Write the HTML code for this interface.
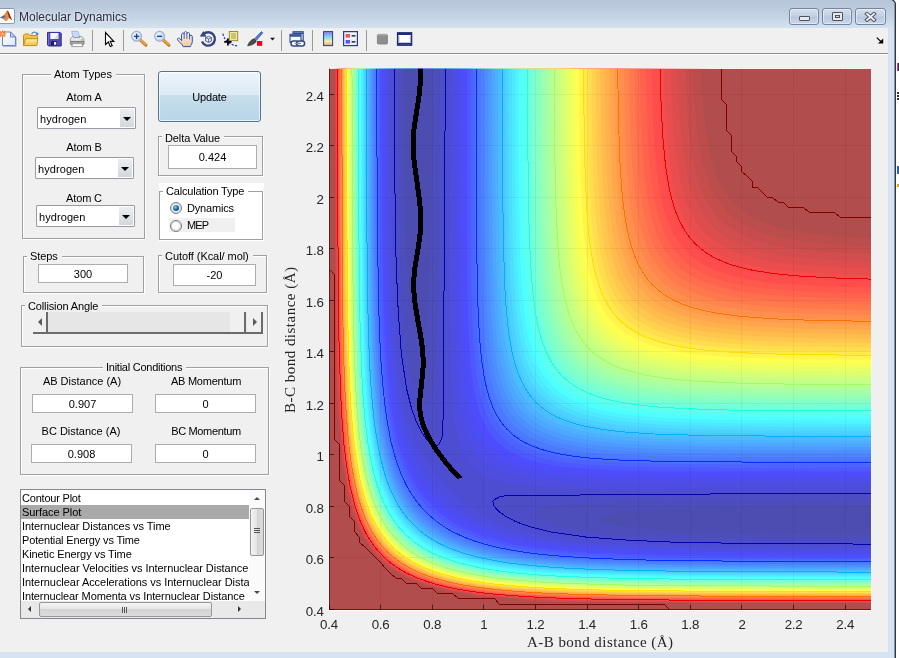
<!DOCTYPE html>
<html lang="en">
<head>
<meta charset="utf-8">
<title>Molecular Dynamics</title>
<style>
html,body{margin:0;padding:0;}
body{width:899px;height:658px;overflow:hidden;background:#fff;position:relative;font-family:"Liberation Sans",sans-serif;font-size:11px;color:#000;}
.abs{position:absolute;}
#win{position:absolute;left:0;top:0;width:896px;height:658px;background:#d6e3f2;overflow:hidden;will-change:transform;}
#titlebar{position:absolute;left:0;top:0;width:896px;height:28px;background:linear-gradient(#b6c6d8,#c1d0e2 50%,#d3e1f0);}
#title{position:absolute;left:19px;top:9px;font-size:12px;line-height:16px;color:#2b2d42;white-space:nowrap;text-shadow:0 0 5px rgba(255,255,255,.75),0 0 2px rgba(255,255,255,.5);}
#client{position:absolute;left:0;top:28px;width:888px;height:624px;background:#f0f0f0;}
#toolbar{position:absolute;left:0;top:0;width:888px;height:25px;background:#f0f0f0;border-bottom:1px solid #8e8e8e;box-shadow:0 1px 0 #fbfbfb;}
.sep{position:absolute;top:3px;width:1px;height:20px;background:#a0a0a0;}
.ico{position:absolute;top:3px;width:18px;height:18px;}
.panel{position:absolute;border:1px solid #a0a0a0;box-shadow:1px 1px 0 #fff, inset 1px 1px 0 #fff;box-sizing:border-box;}
.ptitle{position:absolute;top:-7px;background:#f0f0f0;padding:0 4px 0 3px;line-height:13px;white-space:nowrap;}
.lbl{position:absolute;text-align:center;line-height:13px;white-space:nowrap;}
.edit{position:absolute;background:#fff;border:1px solid #abadb3;box-sizing:border-box;text-align:center;white-space:nowrap;}
.popup{position:absolute;background:#fff;border:1px solid #979aa3;border-radius:1px;box-sizing:border-box;white-space:nowrap;}
.popup span{position:absolute;left:2px;top:5px;line-height:13px;letter-spacing:.08px;}
.popup i{position:absolute;right:1px;top:1px;bottom:1px;width:14px;background:linear-gradient(#eceef1,#d3d7dd);box-sizing:border-box;}
.popup i:after{content:"";position:absolute;left:3px;top:8px;border:4px solid transparent;border-top:4px solid #000;border-bottom:none;}
.radio{position:absolute;width:10px;height:10px;border-radius:50%;border:1px solid #7c7c7c;background:radial-gradient(circle at 45% 45%,#fdfdfd 35%,#cfcfcf);box-shadow:inset 0 0 0 1px #d9d9d9;box-sizing:content-box;}
#list .row{position:absolute;left:0;width:227px;height:14px;line-height:14px;padding-left:1px;white-space:nowrap;overflow:hidden;}
</style>
</head>
<body>
<!-- background window fragments on far right -->
<div class="abs" style="left:896px;top:0;width:3px;height:658px;background:#fff;"></div>
<div class="abs" style="left:897px;top:63px;width:2px;height:8px;background:#3a3070;border-left:1px solid #c8463c;"></div>
<div class="abs" style="left:897px;top:92px;width:2px;height:2px;background:#333;box-shadow:0 3px 0 #333,0 6px 0 #333;"></div>
<div class="abs" style="left:897px;top:166px;width:2px;height:8px;background:#2f5fb0;"></div>
<div class="abs" style="left:897px;top:184px;width:2px;height:3px;background:#e0a040;"></div>

<div id="win">
  <div id="titlebar">
    <!-- matlab icon -->
    <div class="abs" style="left:-3px;top:8px;width:16px;height:14px;background:#fff;border:1px solid #8a9bb0;border-radius:2px;"></div>
    <svg class="abs" style="left:0;top:10px" width="13" height="12" viewBox="0 0 13 14" preserveAspectRatio="none">
      <path d="M0 9 L4 6 L7 1 C8 0 9 3 12 12 L9 9 L6 13 L3 10 Z" fill="#d8572a"/>
      <path d="M0 9 L4 6 L6 8 L3 10 Z" fill="#4a6fb5"/>
      <path d="M7 1 C8 0 9 3 12 12 L9 9 Z" fill="#8c2b1a"/>
      <path d="M4 6 L7 1 L9 9 L6 13 L3 10 L6 8 Z" fill="#f0a03c" opacity=".75"/>
    </svg>
    <div id="title">Molecular Dynamics</div>
    <!-- window buttons -->
    <div class="abs wbtn" style="left:789px;top:8px;width:28px;height:15px;border:1px solid #7584a0;border-radius:3px;background:linear-gradient(#d3deec,#c3d1e4 48%,#b7c7de 52%,#c9d7ea);box-shadow:inset 0 0 0 1px rgba(255,255,255,.45);">
      <div class="abs" style="left:9px;top:7px;width:9px;height:3px;border:1px solid #4c5260;border-radius:1px;background:#e6e8ee;"></div>
    </div>
    <div class="abs wbtn" style="left:822px;top:8px;width:28px;height:15px;border:1px solid #7584a0;border-radius:3px;background:linear-gradient(#d3deec,#c3d1e4 48%,#b7c7de 52%,#c9d7ea);box-shadow:inset 0 0 0 1px rgba(255,255,255,.45);">
      <div class="abs" style="left:9px;top:3px;width:9px;height:7px;border:1px solid #4c5260;border-radius:1px;background:#e6e8ee;"></div>
      <div class="abs" style="left:12px;top:6px;width:3px;height:1px;border:1px solid #4c5260;background:#c5d3e6;"></div>
    </div>
    <div class="abs wbtn" style="left:855px;top:8px;width:29px;height:15px;border:1px solid #7584a0;border-radius:3px;background:linear-gradient(#d3deec,#c3d1e4 48%,#b7c7de 52%,#c9d7ea);box-shadow:inset 0 0 0 1px rgba(255,255,255,.45);">
      <svg class="abs" style="left:8px;top:3px" width="13" height="10" viewBox="0 0 13 10"><path d="M3 1.8 L10 8 M10 1.8 L3 8" stroke="#4c5260" stroke-width="3.8" stroke-linecap="square"/><path d="M3 1.8 L10 8 M10 1.8 L3 8" stroke="#eceef3" stroke-width="1.9" stroke-linecap="square"/></svg>
    </div>
  </div>
  <div id="client">
    <div id="toolbar">
<svg class="abs" style="left:0;top:0" width="888" height="25" viewBox="0 28 888 25">
<defs>
<linearGradient id="gPage" x1="0" y1="0" x2="1" y2="1"><stop offset="0" stop-color="#fff"/><stop offset="1" stop-color="#dce8fa"/></linearGradient>
<linearGradient id="gFold" x1="0" y1="0" x2="0" y2="1"><stop offset="0" stop-color="#fdf0a8"/><stop offset="1" stop-color="#eebf3e"/></linearGradient>
<linearGradient id="gCb" x1="0" y1="0" x2="0" y2="1"><stop offset="0" stop-color="#8f7fe8"/><stop offset=".35" stop-color="#7fd0f0"/><stop offset=".7" stop-color="#f4f0a0"/><stop offset="1" stop-color="#f0a070"/></linearGradient>
<linearGradient id="gLens" x1="0" y1="0" x2="1" y2="1"><stop offset="0" stop-color="#f4f9ff"/><stop offset="1" stop-color="#b8d4f0"/></linearGradient>
<linearGradient id="gHand" x1="0" y1="0" x2="0" y2="1"><stop offset="0" stop-color="#fff6ea"/><stop offset="1" stop-color="#f0c8a0"/></linearGradient>
</defs>
<!-- separators -->
<path d="M92.5 30V51M123.5 30V51M281.5 30V51M312.5 30V51M366.5 30V51" stroke="#9a9a9a" fill="none"/>
<!-- 1 new -->
<path d="M3 46.5H16.2V37.5" fill="none" stroke="#a9b6d4"/>
<path d="M2.5 32H10.5L15.5 37V45.5H2.5Z" fill="url(#gPage)" stroke="#6f83b8"/>
<path d="M10.5 32V37H15.5Z" fill="#c8d6f0" stroke="#6f83b8"/>
<path d="M2.6 30.4V37.6M-1 34H6.2M0 31.4L5.2 36.6M5.2 31.4L0 36.6" stroke="#ee6a28" stroke-width="1.2" fill="none"/>
<circle cx="2.6" cy="34" r="1.9" fill="#fbb870" stroke="#ee6a28" stroke-width=".6"/>
<!-- 2 open -->
<path d="M23.5 45.5V35.2L24.8 33.9H28.6L30 35.5H36.6L37.5 36.4V39.4" fill="#f0c44a" stroke="#bd8f1e"/>
<path d="M23.5 45.6L25.6 38.7H37.8L36.8 45.6Z" fill="url(#gFold)" stroke="#bd8f1e"/>
<path d="M31.4 34.2C32.8 31.6 35.8 31.4 37.2 33.8" fill="none" stroke="#5a86c8" stroke-width="1.3"/>
<path d="M35.4 34.2L38.2 35.8L38.4 32.4Z" fill="#4474bc"/>
<!-- 3 save -->
<path d="M47.5 32.4H60.2L61.2 33.4V46H48.6L47.5 44.9Z" fill="#4f48bc" stroke="#2f2a8c"/>
<path d="M48.4 33V45" stroke="#7a72d8" stroke-width=".9"/>
<rect x="50.3" y="33" width="8" height="6" fill="#f4f5fb"/>
<path d="M54.5 39L58.3 33V39Z" fill="#d4d8ea"/>
<rect x="51.2" y="41.2" width="5.6" height="4.3" fill="#1c1c38"/>
<rect x="54" y="42" width="2.2" height="2.8" fill="#eceef4"/>
<!-- 4 print -->
<path d="M71.6 31.4H78L79.8 37.4H73.2Z" fill="#c6dcf9" stroke="#8fb0e2" stroke-width=".8"/>
<path d="M70.4 38.6L72.8 36.4H73.2L73.6 37.6H79.8L79.4 36.4H81.4L84 38.8V41.6H70.4Z" fill="#e9e9e9" stroke="#8e8e8e" stroke-width=".8"/>
<path d="M70.4 41.4H84V43.8C84 44.4 83.4 44.8 82.8 44.8H71.6C71 44.8 70.4 44.4 70.4 43.8Z" fill="#a4a4a4" stroke="#6e6e6e" stroke-width=".8"/>
<path d="M72.8 43.6H81.8L83 46.6H71.6Z" fill="#fafafa" stroke="#8c8c8c" stroke-width=".8"/>
<rect x="81.2" y="39.2" width="1.5" height="1.2" fill="#58b858"/>
<!-- 5 pointer -->
<path d="M105.5 32.5V44.5L108.3 42L110.3 46.6L112.2 45.8L110.2 41.4H113.8Z" fill="#fff" stroke="#000" stroke-width="1.1" stroke-linejoin="miter"/>
<!-- 6 zoom in -->
<path d="M140.2 39.8L145.9 45.1" stroke="#b9772a" stroke-width="3.2" stroke-linecap="round"/>
<path d="M140.4 39.6L145.7 44.6" stroke="#f5a53c" stroke-width="1.6" stroke-linecap="round"/>
<circle cx="136.6" cy="36.3" r="4.9" fill="url(#gLens)" stroke="#9db0d6" stroke-width="1.3"/>
<path d="M134 36.3H139.2M136.6 33.7V38.9" stroke="#1c3c90" stroke-width="1.3"/>
<!-- 7 zoom out -->
<path d="M163.2 39.8L168.9 45.1" stroke="#b9772a" stroke-width="3.2" stroke-linecap="round"/>
<path d="M163.4 39.6L168.7 44.6" stroke="#f5a53c" stroke-width="1.6" stroke-linecap="round"/>
<circle cx="159.6" cy="36.3" r="4.9" fill="url(#gLens)" stroke="#9db0d6" stroke-width="1.3"/>
<path d="M157 36.3H162.2" stroke="#1c3c90" stroke-width="1.3"/>
<!-- 8 hand -->
<path d="M183.2 46.6C182 43.8 179.4 42.4 177.7 39.9C176.9 38.5 178.6 37.4 179.9 38.7L181.6 40.6V34.6C181.6 32.6 184.2 32.6 184.2 34.6V33.2C184.2 31 186.9 31 186.9 33.2V34C186.9 32 189.6 32 189.6 34V36.6C189.6 34.8 192.3 34.8 192.3 36.6V41.5C192.3 43.8 190.8 45 190.4 46.6Z" fill="url(#gHand)" stroke="#2c50b0" stroke-width="1"/>
<path d="M184.2 34.6V38.8M186.9 34V38.8M189.6 36.6V39.4" stroke="#2c50b0" stroke-width=".9" fill="none"/>
<!-- 9 rotate -->
<path d="M203.4 34.2A6.7 6.7 0 1 1 202 41.6" fill="none" stroke="#36457c" stroke-width="2.4"/>
<path d="M199.8 36.6L206.4 36.8L203.4 31Z" fill="#36457c"/>
<path d="M205.6 37.6L208.6 36.4L211.4 37.6V41L208.6 42.4L205.6 41Z" fill="#e8eefc" stroke="#3f4f86" stroke-width=".9"/>
<path d="M205.6 37.6L208.6 39L211.4 37.6M208.6 39V42.4" fill="none" stroke="#3f4f86" stroke-width=".8"/>
<!-- 10 data cursor -->
<path d="M222.8 33.6C224 37.6 225.6 40.4 228 42.2C231 44.4 234 45.6 238 46" fill="none" stroke="#1818e0" stroke-width="1.1" stroke-dasharray="2.2 1.4"/>
<rect x="229.3" y="31.5" width="8.4" height="9.2" fill="#f0ea9c" stroke="#8c8430" stroke-width=".9"/>
<path d="M231 34H236M231 36H236M231 38H236" stroke="#9c9440" stroke-width=".9"/>
<path d="M224.2 41.9H231.6M227.9 38.4V45.6" stroke="#000" stroke-width="1.8"/>
<!-- 11 brush -->
<path d="M254.2 39.2L261.4 31.6L262.8 32.8L256 40.8Z" fill="#5c7ad8" stroke="#3450a8" stroke-width=".8"/>
<path d="M247.6 45.8C248.4 43 250.6 40 253.8 38.8L256.2 41.2C255 44 251.4 45.6 247.6 45.8Z" fill="#4a4a4a" stroke="#2a2a2a" stroke-width=".6"/>
<rect x="257" y="41" width="5.2" height="4.8" fill="#f00018"/>
<path d="M270 37.8H275L272.5 40.6Z" fill="#1a1a1a"/>
<!-- 12 link -->
<rect x="293" y="31.7" width="10.2" height="8.6" fill="#dfe8f8" stroke="#2c4c90" stroke-width="1.1"/>
<path d="M293 33.2H303.2" stroke="#2c4c90" stroke-width="1.6"/>
<rect x="290" y="34.3" width="11" height="8" fill="#f6f9fe" stroke="#2c4c90" stroke-width="1.1"/>
<path d="M290 35.9H301" stroke="#2c4c90" stroke-width="1.7"/>
<rect x="291" y="41" width="7.6" height="5" rx="2.5" fill="#fff" stroke="#34487e" stroke-width="1.5"/>
<rect x="296.6" y="41" width="8" height="5" rx="2.5" fill="#fff" fill-opacity=".8" stroke="#34487e" stroke-width="1.5"/>
<path d="M294.6 43.5H301" stroke="#7f93c4" stroke-width="1.3"/>
<!-- 13 colorbar -->
<rect x="323.6" y="31.6" width="9" height="14" fill="url(#gCb)" stroke="#2c3c80"/>
<!-- 14 legend -->
<rect x="343.6" y="31.6" width="13.8" height="14" fill="#eef2fb" stroke="#2c3c80" stroke-width="1.2"/>
<rect x="345.6" y="34" width="4.4" height="3.6" fill="#e85858"/>
<rect x="345.6" y="40" width="4.4" height="3.6" fill="#5858e8"/>
<path d="M351.6 35.8H355.4M351.6 41.8H355.4" stroke="#000" stroke-width="1.2"/>
<!-- 15 gray box -->
<rect x="377.4" y="34.4" width="10" height="9.6" rx="1" fill="#8e8e8e" stroke="#7a7a7a" stroke-width=".8"/>
<path d="M378 34.9H387" stroke="#b4b4b4"/>
<!-- 16 dock -->
<rect x="397.6" y="32.8" width="14" height="12.4" fill="#fff" stroke="#1c2c78" stroke-width="1.4"/>
<path d="M397.6 34H411.6M397.6 43.8H411.6" stroke="#1c2c78" stroke-width="2"/>
<path d="M398.6 36.5V42.5M410.6 36.5V42.5" stroke="#5868a8" stroke-width="1.6" stroke-dasharray="1 1"/>
<!-- right arrow -->
<path d="M876.8 37.6L882 42.6" stroke="#000" stroke-width="1.3" fill="none"/><path d="M883.2 38.4V43.6H878Z" fill="#000"/>
</svg>

    </div>

    <!-- Atom Types -->
    <div class="panel" style="left:22px;top:46px;width:123px;height:165px;">
      <div class="ptitle" style="left:28px;">Atom Types</div>
    </div>
    <div class="lbl" style="left:34px;top:63px;width:100px;">Atom A</div>
    <div class="popup" style="left:37px;top:79px;width:99px;height:22px;"><span>hydrogen</span><i></i></div>
    <div class="lbl" style="left:34px;top:113px;width:100px;letter-spacing:-.1px;">Atom B</div>
    <div class="popup" style="left:35px;top:129px;width:99px;height:22px;"><span>hydrogen</span><i></i></div>
    <div class="lbl" style="left:34px;top:164px;width:100px;letter-spacing:-.15px;">Atom C</div>
    <div class="popup" style="left:36px;top:177px;width:99px;height:22px;"><span>hydrogen</span><i></i></div>

    <!-- Update button -->
    <div class="abs" style="left:158px;top:43px;width:103px;height:51px;box-sizing:border-box;border:1px solid #4f7596;border-radius:3px;background:linear-gradient(#edf4fa,#dceaf4 47%,#c7deec 47%,#b8d5e6);box-shadow:inset 0 0 0 1px rgba(255,255,255,.7);text-align:center;line-height:50px;letter-spacing:-.2px;">Update</div>

    <!-- Delta Value -->
    <div class="panel" style="left:158px;top:108px;width:105px;height:40px;">
      <div class="ptitle" style="left:3px;top:-5px;letter-spacing:-.1px;">Delta Value</div>
    </div>
    <div class="edit" style="left:168px;top:117px;width:89px;height:24px;line-height:22px;">0.424</div>

    <!-- Calculation Type -->
    <div class="abs" style="left:159px;top:155px;width:105px;height:58px;background:#fff;"></div>
    <div class="panel" style="left:159px;top:163px;width:104px;height:49px;">
      <div class="ptitle" style="left:3px;background:#fff;letter-spacing:-.18px;">Calculation Type</div>
    </div>
    <div class="radio" style="left:170px;top:174px;"></div>
    <div class="abs" style="left:173px;top:177px;width:6px;height:6px;border-radius:50%;background:radial-gradient(circle at 38% 35%,#7fd0f4,#1a74b8 45%,#0b2c58 85%);"></div>
    <div class="abs" style="left:187px;top:174px;line-height:13px;letter-spacing:-.19px;">Dynamics</div>
    <div class="abs" style="left:169px;top:190px;width:66px;height:14px;background:#f0f0f0;"></div>
    <div class="radio" style="left:170px;top:192px;"></div>
    <div class="abs" style="left:187px;top:191px;line-height:13px;letter-spacing:-.9px;">MEP</div>

    <!-- Steps -->
    <div class="panel" style="left:23px;top:228px;width:121px;height:37px;">
      <div class="ptitle" style="left:3px;letter-spacing:-.1px;">Steps</div>
    </div>
    <div class="edit" style="left:38px;top:236px;width:90px;height:19px;line-height:19px;">300</div>

    <!-- Cutoff -->
    <div class="panel" style="left:158px;top:227px;width:109px;height:38px;">
      <div class="ptitle" style="left:3px;top:-6px;letter-spacing:-.06px;">Cutoff (Kcal/ mol)</div>
    </div>
    <div class="edit" style="left:173px;top:236px;width:83px;height:22px;line-height:21px;">-20</div>

    <!-- Collision Angle -->
    <div class="panel" style="left:21px;top:277px;width:247px;height:42px;">
      <div class="ptitle" style="left:3px;top:-6px;letter-spacing:-.13px;">Collision Angle</div>
    </div>
    <div class="abs" style="left:33px;top:284px;width:230px;height:20px;background:#e6e6e6;"></div>
    <div class="abs" style="left:33px;top:304px;width:230px;height:2px;background:#6b6b6b;"></div>
    <div class="abs" style="left:33px;top:284px;width:13px;height:20px;background:#f0f0f0;border-right:2px solid #6b6b6b;"></div>
    <div class="abs" style="left:38px;top:290px;border:4px solid transparent;border-right:4px solid #5a5a5a;border-left:none;"></div>
    <div class="abs" style="left:230px;top:284px;width:14px;height:20px;background:#f0f0f0;border-right:2px solid #6b6b6b;"></div>
    <div class="abs" style="left:247px;top:284px;width:14px;height:20px;background:#f0f0f0;border-right:2px solid #6b6b6b;"></div>
    <div class="abs" style="left:253px;top:290px;border:4px solid transparent;border-left:4px solid #5a5a5a;border-right:none;"></div>

    <!-- Initial Conditions -->
    <div class="panel" style="left:20px;top:339px;width:249px;height:108px;">
      <div class="ptitle" style="left:82px;letter-spacing:-.25px;">Initial Conditions</div>
    </div>
    <div class="lbl" style="left:32px;top:347px;width:100px;">AB Distance (A)</div>
    <div class="lbl" style="left:156px;top:347px;width:100px;letter-spacing:-.23px;">AB Momentum</div>
    <div class="edit" style="left:32px;top:366px;width:101px;height:19px;line-height:19px;">0.907</div>
    <div class="edit" style="left:155px;top:366px;width:101px;height:19px;line-height:19px;">0</div>
    <div class="lbl" style="left:31px;top:397px;width:100px;">BC Distance (A)</div>
    <div class="lbl" style="left:156px;top:397px;width:100px;letter-spacing:-.33px;">BC Momentum</div>
    <div class="edit" style="left:31px;top:416px;width:101px;height:19px;line-height:19px;">0.908</div>
    <div class="edit" style="left:155px;top:416px;width:101px;height:19px;line-height:19px;">0</div>

    <!-- Listbox -->
    <div id="list" class="abs" style="left:20px;top:461px;width:246px;height:130px;background:#fff;border:1px solid #828790;box-sizing:border-box;">
      <div class="row" style="top:1px;letter-spacing:-0.21px;">Contour Plot</div>
      <div class="row" style="top:15px;background:#a9a9a9;letter-spacing:-0.05px;">Surface Plot</div>
      <div class="row" style="top:29px;letter-spacing:-0.06px;">Internuclear Distances vs Time</div>
      <div class="row" style="top:43px;letter-spacing:-0.16px;">Potential Energy vs Time</div>
      <div class="row" style="top:57px;letter-spacing:-0.1px;">Kinetic Energy vs Time</div>
      <div class="row" style="top:71px;letter-spacing:-0.05px;">Internuclear Velocities vs Internuclear Distance</div>
      <div class="row" style="top:85px;letter-spacing:-0.05px;">Internuclear Accelerations vs Internuclear Distance</div>
      <div class="row" style="top:99px;letter-spacing:-0.12px;">Internuclear Momenta vs Internuclear Distance</div>
      <!-- v scrollbar -->
      <div class="abs" style="left:228px;top:0;width:16px;height:111px;background:#fafafa;"></div>
      <div class="abs" style="left:233px;top:7px;border:3px solid transparent;border-bottom:3px solid #4a4a4a;border-top:none;"></div>
      <div class="abs" style="left:229px;top:18px;width:14px;height:48px;box-sizing:border-box;border:1px solid #979797;border-radius:2px;background:linear-gradient(90deg,#f4f4f4,#e4e4e4 50%,#d4d4d4 50%,#dcdcdc);"></div>
      <div class="abs" style="left:233px;top:38px;width:6px;height:1px;background:#555;box-shadow:0 2px 0 #555,0 4px 0 #555;"></div>
      <div class="abs" style="left:233px;top:101px;border:3px solid transparent;border-top:3px solid #4a4a4a;border-bottom:none;"></div>
      <!-- h scrollbar -->
      <div class="abs" style="left:0;top:111px;width:244px;height:17px;background:#e9e9e9;"></div>
      <div class="abs" style="left:7px;top:116px;border:3.5px solid transparent;border-right:3.5px solid #333;border-left:none;"></div>
      <div class="abs" style="left:18px;top:112px;width:173px;height:15px;box-sizing:border-box;border:1px solid #979797;border-radius:2px;background:linear-gradient(#f4f4f4,#e4e4e4 50%,#d4d4d4 50%,#dcdcdc);"></div>
      <div class="abs" style="left:101px;top:117px;width:1px;height:6px;background:#555;box-shadow:2px 0 0 #555,4px 0 0 #555;"></div>
      <div class="abs" style="left:217px;top:116px;border:3.5px solid transparent;border-left:3.5px solid #333;border-right:none;"></div>
    </div>

  </div>
  <!-- window right/bottom border lines -->
  <svg class="abs" style="left:884px;top:0" width="12" height="658" viewBox="884 0 12 658"><path d="M891.5 0Q895.5 1 895.5 5H896V0Z" fill="#fff"/><path d="M894.5 4V658" stroke="#9aa7b8" fill="none"/><path d="M891.5 -.5Q895.5 1 895.5 5V658" stroke="#2e3744" stroke-width="1.3" fill="none"/></svg>
</div>
<svg class="abs" style="left:0;top:0;will-change:transform" width="899" height="658" viewBox="0 0 899 658">
<defs><clipPath id="cp"><rect x="329" y="68.7" width="542" height="540.5"/></clipPath></defs>
<rect x="328" y="68" width="543.4" height="543" fill="#fff" fill-opacity=".85"/>
<g clip-path="url(#cp)" shape-rendering="auto">
<rect x="329" y="68.7" width="542" height="540.5" fill="#b14d4d"/>
<path fill="#b14d4d" d="M846.7 604.1l24.3 0.1v-374.6l-25.8-1.6l-20.6-2l-19.7-2.9l-16.5-3.7l-5.3-1.4l-10.2-3.6l-10.3-4.7l-5.2-2.9l-5.1-3.4l-7.3-6l-5-5.2l-3.2-4l-4.3-6.3l-2.9-5.1l-4.8-10.3l-3.5-10.1l-1.5-5.4l-3.6-16.4l-3-19.6l-2-20.6l-1.6-25.7h-375.6l0.9 298.5l0.3 30.9l0.7 20.6l0.5 5.2l0.9 5.1l2 4.4l0.5 5.9l0.5 20.6l0.7 10.3l1.3 5.2l2.2 2.5l0.4 2.6l1 15.4l1.6 5.2l2.1 2.1l0.8 3l0.3 5.2l1 5.1l3.1 3.2l0.7 2l0.6 5.1l3.9 5.1l1.2 5.2l4.5 5.2l1.5 5.1l3.1 3.1l1.4 2.1l14.1 14l2.1 1.4l3 3.1l5.2 1.5l5.2 4.5l5.2 1.2l5.1 3.9l5.2 0.5l2 0.8l3.1 3.1l5.2 1l5.1 0.3l3.1 0.7l2.1 2.1l5.2 1.7l15.5 0.9l2.5 0.5l2.6 2.1l5.2 1.3l10.3 0.8l20.6 0.4l6 0.5l4.4 2l5.1 0.9l10.4 0.8l15.4 0.4l46.5 0.4z"/>
<path fill="#bc4d4d" d="M512.4 598.9l7.6 1.7l10.3 0.9l15.5 0.7l20.7 0.4l160 0.7l144.5 0.2v-365.2l-25.8-1.4l-25.8-2.3l-20.7-2.9l-15.4-3.2l-15.5-4.6l-10.4-4.3l-5.1-2.7l-6.7-4.1l-8.8-7.1l-3.2-3.2l-4.4-5.1l-3.7-5.2l-4.2-7l-3.9-8.4l-2-5.2l-4.4-14.3l-3.5-16.6l-2.9-20.6l-2.3-25.7l-1.4-25.7h-366.2l0.7 267.7l0.3 36l0.5 25.7l0.9 15.5l0.6 5.1l1.6 7.6l1.1 13l0.5 15.5l0.8 10.3l1 5.1l1.8 4.2l1 6.1l0.9 10.3l0.9 5.1l2.3 4.4l1.5 5.9l0.6 5.2l2 5.1l1.1 1.2l1.5 4l1 5.1l2.7 3.5l2.5 6.8l2.6 3l4.2 7.3l1 1l2.8 4.2l12.7 12.6l4.2 2.8l0.9 1l7.4 4.2l3 2.6l6.9 2.5l3.4 2.7l5.2 1l4 1.5l1.1 1.1l5.2 2l5.1 0.6l6 1.4l4.4 2.4l5.1 0.9l10.4 0.8l6.1 1.1l4.2 1.8l5.1 0.9l10.4 0.8l15.4 0.5z"/>
<path fill="#c74d4d" d="M520.4 598.9l9.9 1.4l10.3 0.7l41.3 1l139.4 0.8l149.7 0.2v-356.6l-25.8-1.2l-25.8-1.9l-20.7-2.5l-10.3-1.7l-10.3-2.1l-13.3-3.6l-13.5-5.2l-9.3-4.8l-5.2-3.4l-5.2-4l-3.5-3.2l-4.8-5.1l-4-5.2l-3.4-5.1l-2.9-5.2l-2.5-5.1l-3.9-10.3l-4.4-15.5l-2.1-10.3l-1.7-10.3l-2.5-20.6l-1.9-25.7l-1.2-25.7h-357.6l0.7 252.2l0.4 46.3l0.7 25.8l1 15.4l1.3 9.9l1.7 21l1.1 20.6l0.8 5.2l1.6 5.5l1.7 9.9l1.1 10.3l1.4 5.1l0.9 1.8l3.1 13.7l2.1 4.2l3.8 11.2l1.4 1.8l3.7 8.5l1.4 1.6l5.2 8l4.2 5.9l4.7 5.1l6.6 6.1l5.8 4.2l8.1 5.2l1.6 1.4l8.5 3.7l1.8 1.4l11.2 3.8l4.3 2.1l13.7 3l1.8 1l5.1 1.3l10.4 1.2l9.9 1.7l5.5 1.5l5.2 0.8l20.6 1.2z"/>
<path fill="#d24d4d" d="M529.6 598.9l11 1.1l15.5 0.8l41.3 0.8l123.9 0.7l149.7 0.2v-348.4l-31-1.3l-25.8-1.9l-20.6-2.3l-20.7-3.6l-15.5-4.1l-6.7-2.4l-8.7-3.7l-5.2-2.7l-6.3-3.9l-4-2.9l-5.2-4.4l-7.4-8.1l-3.7-5.1l-4.4-7.5l-3.7-8l-2-5.1l-4.7-15.5l-2.2-10.3l-1.9-10.3l-2.6-20.6l-2-25.7l-1.6-36h-349.4l0.2 133.8l0.5 113.3l0.5 46.3l0.8 25.7l4.4 61.8l1 10.3l1.4 6.6l3.7 24.3l1.4 4.2l4.1 16.4l1.1 2.2l5 13.2l5.2 10.3l5.3 8.3l5.2 6.8l5.1 5.6l5.6 5.1l4.7 3.7l10.4 6.7l5.1 2.6l5.2 2.6l13.3 5l2.2 1l16.4 4.1l4.2 1.4l24.4 3.8l6.6 1.4l5.2 0.6z"/>
<path fill="#de4d4d" d="M540.2 598.9l26.3 1.4l46.4 0.9l113.6 0.6l144.5 0.2v-340.6l-36.1-1.4l-25.8-1.8l-20.7-2.2l-10.3-1.6l-10.3-1.9l-15.5-3.9l-10.3-3.6l-5.2-2.1l-10.3-5.5l-5.9-4l-6.2-5.2l-5-5.1l-3.6-4.4l-4-5.9l-2.9-5.1l-3.4-7.1l-3.2-8.4l-2-5.9l-2.5-9.5l-2.2-10.3l-1.7-10.3l-3-25.8l-1.8-25.7l-1.4-36h-341.5l0.2 133.8l0.5 103l0.5 46.3l0.9 30.9l2.2 36l2.8 36.1l4.8 30.8l1.1 5.2l4 15.4l5.3 15.5l4.7 10.3l5.8 10.3l6.5 8.7l5.1 5.7l6.8 6.2l6.8 5.1l8.4 5.2l10.6 5.1l8.7 3.4l10.3 3.4l20.7 5.1l31 4.8l30.9 2.4z"/>
<path fill="#e94d4d" d="M552.8 598.9l29.1 1.1l51.7 0.8l98 0.5l139.4 0.2v-333.1l-36.1-1.3l-31-1.9l-25.8-2.9l-17.9-3.2l-7.9-1.8l-10.3-3l-5.2-1.8l-8.6-3.7l-6.9-3.6l-5.1-3.3l-5.2-3.9l-5.2-4.6l-4.6-5.2l-3.9-5.1l-3.3-5.1l-3.7-6.9l-3.6-8.6l-1.8-5.1l-3-10.3l-1.9-7.9l-3.1-17.9l-2.9-25.7l-2-30.9l-1.2-36h-334.1l0.3 144.1l0.5 103l0.8 46.3l1.6 36l1.5 25.8l2 25.7l2.9 20.6l2.5 15.4l2.4 10.3l2.7 10.3l5.3 15.5l5.9 12.6l4.8 8l5.6 7.5l7.2 7.9l5.8 5.2l7.6 5.5l8 4.8l12.7 5.9l15.4 5.3l10.4 2.6l10.3 2.5l20.6 3.2l10.4 1.5l10.3 1l31 2.3z"/>
<path fill="#f44d4d" d="M568.3 598.9l34.3 0.9l46.4 0.5l222 0.7v-326l-36.1-1.1l-31-1.7l-25.8-2.5l-20.7-3.3l-15.4-3.6l-10.4-3.3l-5.1-2l-7.6-3.5l-7.9-4.6l-5.2-3.8l-5.1-4.4l-5.2-5.4l-5.2-6.8l-3.6-5.9l-2.7-5.1l-4-9.3l-2.1-6.2l-4.1-15.4l-3.7-20.6l-2.7-25.8l-2-30.9l-1.3-41.1h-326.8l0.2 144.1l0.5 97.8l0.8 46.3l1.6 41.2l1.2 20.6l2 25.8l3.3 25.7l2.6 15.4l3.7 15.5l3 10.3l3.8 10.3l5.1 11.1l5.2 8.7l5.2 7.1l8.3 9.1l7.1 6.1l5.2 3.7l5.2 3.2l10.3 5.3l10.3 4.2l10.3 3.5l20.7 5l15.5 2.6l15.5 2.2l10.3 1.1l25.8 2z"/>
<path fill="#ff4d4d" d="M588.4 598.9l40 0.7l56.8 0.5l185.8 0.3v-319l-41.3-1.2l-31-1.7l-15.4-1.3l-15.5-1.8l-10.4-1.6l-10.3-1.9l-10.3-2.5l-10.3-3.2l-5.2-2l-10.3-4.8l-5.2-3.1l-5.1-3.5l-5.2-4.3l-4.8-4.8l-4.3-5.2l-3.6-5.1l-3.1-5.2l-4.8-10.2l-5.2-15.5l-3.5-15.4l-3.1-20.6l-2.5-25.8l-1.7-30.9l-1.2-41.1h-319.9l0.2 149.3l0.6 92.6l1 51.5l2 46.3l2.6 36.1l2.6 20.6l2.4 15.4l2.1 10.3l3.5 13.8l4 11.9l4.3 10.3l5.4 10.3l7 10.3l5.1 6l5.2 5.1l5.1 4.4l7.4 5.1l8.9 5.2l11.5 5.1l13.5 4.7l10.4 2.7l15.5 3.3l15.4 2.5l20.7 2.5l20.6 1.7l20.7 1.2z"/>
<path fill="#ff584d" d="M617 598.9l94 0.8l160 0.2v-312.4l-41.3-1l-36.1-1.9l-15.5-1.3l-15.5-1.8l-10.3-1.5l-10.3-1.9l-15.5-3.9l-10.3-3.6l-5.2-2.2l-8.1-4.1l-7.4-4.8l-5.2-4.2l-5.1-5l-5.2-6.1l-3.8-5.7l-3-5.1l-3.5-7.4l-3.1-8l-2.1-6.5l-2.3-9l-2.2-10.3l-3.1-20.6l-2.7-29.6l-1.6-32.2l-1-41.1h-313.3l0.2 149.3l0.6 87.5l1.1 56.6l1.9 46.3l2.7 36.1l2.6 20.6l2.2 14.4l3.6 16.4l2.9 10.3l3.9 11.6l5.1 11.7l5.2 9.2l6.2 8.7l4.4 5.2l4.9 4.9l6.5 5.4l9 6.1l10.3 5.4l10.3 4.4l14.5 4.7l16.5 3.9l10.3 1.9l15.5 2.3l20.6 2.3l25.9 1.9l25.8 1.3l30.9 1.1z"/>
<path fill="#ff634d" d="M666.4 598.9l204.6 0.5v-306l-41.3-0.9l-36.1-1.7l-15.5-1.1l-15.5-1.6l-21.5-3.2l-9.5-2l-10.3-2.7l-10.3-3.5l-5.2-2.1l-9.9-5.2l-5.6-3.6l-5.1-4.1l-5.2-4.8l-5.1-6l-5-7.2l-5.4-10.3l-2.1-5.2l-3.5-10.2l-2.7-10.3l-2.2-10.3l-1.6-10.3l-2-15.5l-2.1-25.7l-1.7-36.1l-0.9-41.1h-306.9l0.3 154.4l0.6 82.4l1.3 61.7l0.9 25.8l1.4 25.7l1.7 20.6l2.3 20.6l2.3 15.9l3.1 15l2.5 10.3l4.8 14.7l5.1 12l5.2 9.5l7.2 10.1l4.5 5.2l3.8 3.7l7.8 6.6l7.7 5.2l9.3 5.1l12.1 5.1l16.3 5.2l13.9 3.2l15.5 2.8l20.6 2.7l15.5 1.6l25.8 1.7l25.8 1.2l31 1z"/>
<path fill="#ff6e4d" d="M511.6 593.8l23.9 1.4l25.8 1.2l67.1 1.5l87.8 0.7l154.8 0.3v-299.8l-46.4-1l-36.2-1.7l-25.8-2.1l-15.5-1.9l-10.3-1.7l-10.3-2.1l-10.3-2.6l-5.2-1.7l-10.3-3.9l-11.2-5.8l-7.4-5.2l-6-5.1l-4.7-5.2l-4-5.1l-3.4-5.2l-5.3-10.3l-4-10.3l-1.6-5.1l-2.7-10.3l-2.1-10.3l-1.6-10.3l-2-15.4l-2.1-25.8l-1.6-36l-1-46.3h-300.7l0.2 133.8l0.5 82.4l1 61.8l1.5 46.3l2.1 36l2.1 20.6l1.9 15.5l1.7 10.3l3.1 15.4l2.6 10.3l3.2 10.3l4 10.3l5 10.3l6.4 10.3l4 5.1l7.2 7.8l5.1 4.6l5.2 3.9l10.3 6.4l5.9 3.1l12.5 5.1l12.6 4l10.3 2.6l15.5 3.1l10.3 1.6l20.7 2.5z"/>
<path fill="#ff794d" d="M519.9 593.8l25.9 1.4l25.8 0.9l62 1.3l87.7 0.6l149.7 0.3v-293.7l-51.6-1.1l-36.1-1.6l-25.9-2.1l-15.4-1.9l-10.4-1.7l-10.3-2.1l-10.3-2.6l-5.2-1.6l-10.3-3.9l-5.2-2.5l-6.8-3.8l-7.3-5.1l-5.8-5.2l-4.8-5.1l-3.9-5.2l-3.3-5.1l-5.3-10.3l-3.9-10.3l-1.6-5.2l-2.7-10.2l-2.1-10.3l-1.6-10.3l-1.9-15.5l-2.1-25.7l-1.7-36.1l-1-51.4h-294.6l0.2 133.8l0.5 82.4l1 61.8l1.5 46.3l2.2 36l2 20.6l2 15.5l1.7 10.3l3.1 15.4l2.7 10.3l3.1 10.3l5.2 12.9l4 7.7l6.4 10.1l5.1 6.5l5.2 5.5l3.9 3.6l6.4 5.1l8.2 5.2l7.3 3.9l5.2 2.4l10.3 4.1l15.5 4.6l10.3 2.3l15.5 2.9l10.3 1.5l20.6 2.3z"/>
<path fill="#ff844d" d="M529.4 593.8l47.4 1.9l61.9 1.2l87.8 0.6l144.5 0.2v-287.8l-51.6-1l-36.1-1.5l-31-2.3l-15.5-1.9l-10.3-1.7l-10.3-2.1l-10.4-2.6l-5.3-1.6l-10.2-3.9l-5.1-2.4l-7.2-4l-7.3-5.2l-5.8-5.1l-4.7-5.2l-3.9-5.1l-3.3-5.2l-5.2-10.3l-3.9-10.1l-1.6-5.3l-2.7-10.3l-2.1-10.3l-1.6-10.3l-1.9-15.4l-2.4-30.9l-1.5-36.1l-1-51.4h-288.6l0.2 133.8l0.5 82.4l0.9 61.8l1.6 46.3l0.8 16.4l1.4 19.6l1.5 15.5l2.2 18.8l2 12.1l3.1 15.4l2.8 10.3l3.3 10.3l4.3 11l4.9 9.6l5.5 8.7l5.1 6.7l5.2 5.5l5.2 4.8l5.1 4l9.7 6.3l5.8 3l10.3 4.6l10.3 3.6l15.3 4.3l10.6 2.2l17.2 2.9l13.7 1.7l20.7 2z"/>
<path fill="#ff8f4d" d="M540.4 593.8l46.7 1.6l61.9 1l82.6 0.5l139.4 0.2v-282.1l-51.6-0.8l-36.1-1.4l-31-2.1l-25.8-3.2l-10.3-1.8l-10.4-2.4l-10.3-3l-10.3-3.9l-5.2-2.4l-7.1-4l-7.3-5.1l-5.8-5.2l-4.7-5.1l-3.9-5.2l-3.3-5.1l-5.2-10.3l-4-10.3l-1.6-5.2l-2.6-10.3l-2.1-10.2l-1.6-10.3l-2-15.5l-2.3-30.9l-1.7-41.2l-0.8-51.4h-282.9l0.2 139l0.5 82.3l1 61.8l1.7 46.6l2.5 35.8l2.2 20.6l1.4 10.3l2.7 15.4l2.2 10.3l4.3 15.4l3.7 10.3l4.7 10.3l5.9 10.3l6.5 8.9l5.2 5.7l6.5 6l6.9 5.2l8.3 5.1l10.5 5.2l13.6 5.1l11 3.1l10.3 2.5l15.5 2.9l11.6 1.8l19.3 2.1l20.7 1.8z"/>
<path fill="#ff9b4d" d="M553.6 593.8l43.8 1.2l62 0.9l211.6 0.6v-276.5l-51.6-0.8l-41.3-1.4l-31-2.2l-25.8-3.2l-10.3-1.8l-10.3-2.4l-10.4-3l-10.3-3.9l-5.1-2.4l-6.7-3.7l-7.4-5.2l-5.8-5.1l-4.8-5.2l-3.9-5.1l-3.3-5.2l-5.3-10.3l-3.9-10.3l-3-10.3l-2.4-10.3l-1.8-10.2l-3.2-25.8l-2.2-30.9l-1.5-41.2l-0.8-51.4h-277.2l0.2 133.8l0.5 82.4l0.9 61.8l1.6 46.3l1.2 20.6l1.6 20.6l1.9 19.2l1.7 11.7l2.7 15.4l2.3 10.3l3.7 13.5l4.4 12.2l5.9 12.7l4.7 7.9l5.6 7.6l5.2 5.8l7.9 7.2l6.9 5.2l8.6 5.1l10.8 5.2l12.2 4.5l10.4 3l11.3 2.8l19.6 3.4l15.5 2.1l20.7 2l20.6 1.5z"/>
<path fill="#ffa64d" d="M570 593.8l48.1 1l56.8 0.7l196.1 0.5v-271.1l-56.8-0.8l-41.3-1.5l-30.9-2.2l-15.5-1.7l-10.3-1.5l-10.4-1.8l-10.3-2.4l-10.3-3l-10.3-4l-11.1-5.7l-7.4-5.1l-6-5.2l-4.8-5.1l-3.9-5.2l-3.4-5.1l-5.3-10.3l-4-10.3l-3-10.3l-2.4-10.3l-1.8-10.3l-1.5-10.3l-1.7-15.4l-2.2-30.9l-1.5-41.2l-0.8-56.6h-271.8l0.2 139l0.5 82.3l1 61.8l1.5 41.2l1.2 20.6l1.6 20.6l1.3 13.6l2.4 17.3l2.8 16l3.6 14.8l3 10.3l3.8 10.3l5.1 11l5.2 8.7l5.1 7.1l3.5 4.1l5 5.2l6 5.1l7.1 5.2l8.8 5.1l11 5.2l14.7 5.1l11 2.9l10.4 2.4l20.6 3.4l15.5 2l25.8 2.2l25.8 1.5z"/>
<path fill="#ffb14d" d="M591.7 593.8l41.9 0.7l56.7 0.5l180.7 0.4v-265.8l-56.8-0.7l-41.3-1.4l-20.6-1.1l-15.5-1.3l-15.5-1.7l-10.3-1.5l-10.3-1.9l-10.4-2.4l-10.3-3l-10.2-4l-10-5.1l-5.6-3.7l-5.2-4l-5.1-4.9l-5.2-6l-4.9-7.2l-5.4-10.3l-4-10.3l-3-10.3l-2.4-10.3l-1.9-10.3l-1.5-10.2l-1.7-15.5l-1.3-15.4l-1.2-20.6l-1.3-41.2l-0.8-56.6h-266.4l0.2 144.1l0.6 87.5l1.1 56.6l1.9 46.4l2.9 38.3l2.4 18.3l2.4 15.5l2.2 10.2l3.4 13.4l4.1 12.4l4.3 10.3l5.5 10.3l6.7 9.9l5.2 6.1l4.6 4.6l5.7 4.8l7.7 5.5l9 5.1l11.5 5.2l13.1 4.5l10.3 2.8l13.5 3l17.5 2.8l18.3 2.3l23 1.9l20.6 1.3z"/>
<path fill="#ffbc4d" d="M623.7 593.8l92.5 0.7l154.8 0.3v-260.6l-56.8-0.7l-41.3-1.2l-20.6-1l-15.5-1.2l-25.8-2.9l-10.3-1.7l-10.4-2.2l-10.3-2.7l-10.3-3.5l-10.3-4.7l-5.2-2.9l-6-4l-6.1-5.2l-5-5.1l-4.1-5.2l-4.6-7l-4.3-8.4l-2.2-5.2l-3.8-11.2l-2.5-9.4l-3-15.4l-1.5-10.3l-1.8-15.4l-1.2-15.5l-1.2-20.6l-1.4-41.2l-0.8-61.7h-261.2l0.2 149.3l0.7 87.5l1.2 56.6l2.1 46.3l1.4 20.6l1.6 15.5l2 15.4l2.5 15.5l4.7 20.5l3.2 10.3l3.9 10.3l4.9 10.3l3.6 6.2l6.6 9.3l4.4 5.1l4.4 4.4l7.1 5.9l8.4 5.8l10.4 5.5l10.3 4.4l15.5 5l15.5 3.6l10.3 2l15.5 2.3l20.6 2.4l25.8 1.9l25.8 1.3l31 1.1z"/>
<path fill="#ffc74d" d="M683.9 593.8l187.1 0.4v-255.5l-61.9-0.7l-46.5-1.5l-31-2l-15.4-1.6l-12.8-1.7l-13.1-2.4l-10.3-2.4l-10.3-3.2l-6.3-2.3l-9.2-4.3l-9.6-6l-5.9-4.7l-5.1-5.1l-4.7-5.6l-3.5-5.2l-3-5.1l-4.8-10.3l-3.6-10.3l-2.7-10.3l-2.2-10.3l-1.7-10.3l-3-25.7l-2.2-36.1l-1.3-41.2l-0.7-61.7h-256.1l0.2 154.4l0.7 82.4l1.4 61.7l1.1 25.8l1.5 25.7l1.8 20.6l2.6 20.6l2.6 15.5l3.4 15.4l2.9 10.3l3.5 10.3l4.5 10.4l5.6 10.2l7.4 10.3l7.6 8.2l8.6 7.2l7.6 5.2l9.7 5.2l12.1 5.1l16.4 5.1l17.9 4l15.5 2.6l20.6 2.5l15.5 1.5l25.8 1.6l31 1.3l31 0.9z"/>
<path fill="#ffd24d" d="M520 588.6l25.8 1.5l25.8 1.1l62 1.4l87.7 0.7l149.7 0.3v-250.5l-61.9-0.6l-41.3-1.2l-36.2-2l-27.5-2.9l-13.8-2.3l-10.3-2.2l-10.3-2.8l-8.8-3l-11.3-5.2l-5.7-3.4l-5.2-3.6l-5.1-4.3l-5.2-5.2l-3.3-4.1l-3.6-5.1l-3.4-5.7l-4.6-9.8l-3.6-10.3l-2.2-7.4l-2.9-13.2l-1.7-10.3l-3-25.7l-2.3-36l-1.3-46.4l-0.7-61.7h-251.1l0.2 128.7l0.5 82.3l0.9 61.8l1.6 46.3l2.2 36.1l2 20.6l2 15.4l1.7 10.3l3.1 15.4l2.7 10.3l3.2 10.3l5.5 13.5l3.7 7.1l6.4 10.3l4.1 5.2l4.6 5.1l7 6.5l5.2 4l10.3 6.5l7.1 3.6l12.6 5.2l11.3 3.5l10.3 2.7l15.5 3.1l10.3 1.7l20.6 2.5z"/>
<path fill="#ffde4d" d="M530 588.6l26.1 1.3l25.8 0.9l62 1.2l87.7 0.7l139.4 0.2v-245.4l-61.9-0.7l-46.5-1.2l-36.1-2.1l-15.5-1.5l-15.5-2l-10.3-1.8l-10.3-2.2l-10.4-2.9l-10.3-3.7l-7.3-3.3l-8.2-4.8l-7.4-5.5l-5.4-5.2l-4.5-5.1l-3.3-4.6l-3.6-5.7l-2.7-5.2l-4.1-9.7l-3.4-10.9l-1.7-6.5l-2.8-14.1l-1.6-10.3l-2.8-25.7l-2.1-36l-1.2-46.4l-0.6-61.7h-246.2l0.2 128.7l0.5 82.3l1 61.8l1.5 46.3l1.1 21l1.2 15.1l2.1 20.6l1.9 15.4l4.9 25.7l5.4 19l5.2 13l4.7 9.2l5.6 9l5 6.5l5.3 5.7l5 4.6l5.4 4.1l9.4 6.2l6.1 3.1l10.3 4.6l10.3 3.7l14.4 4l11.4 2.4l15.5 2.8l10.3 1.3l20.7 2.2z"/>
<path fill="#ffe94d" d="M541.7 588.6l45.4 1.7l61.9 1.1l82.6 0.6l139.4 0.2v-240.5l-67.1-0.7l-46.5-1.3l-36.1-2.1l-25.8-2.8l-20.6-3.6l-10.4-2.6l-10.3-3.3l-10.3-4.4l-8.6-4.8l-6.9-5l-5.2-4.6l-5.1-5.6l-4.1-5.4l-3.2-5.2l-5.1-10.3l-3.8-10.3l-3-10.3l-2.3-10.3l-2.5-15.4l-2.8-25.7l-2.1-36.1l-1.3-46.3l-0.7-66.9h-241.2l0.2 133.8l0.6 82.4l1 61.8l1.6 46.3l2.2 30.9l3.2 30.9l2.6 15.4l2.6 13l3.3 12.7l3.4 10.3l3.6 9.2l5.2 10.4l5.1 8.3l6.4 8.2l3.9 4.3l5.2 4.8l8.2 6.3l8.3 5.2l9.3 4.6l10.3 4.1l10.4 3.4l12.7 3.3l13.1 2.6l15.6 2.6l15.3 1.7l20.7 1.9z"/>
<path fill="#fff44d" d="M555.8 588.6l46.8 1.4l61.9 0.9l206.5 0.7v-235.8l-67.1-0.6l-46.5-1.2l-36.1-1.9l-15.5-1.4l-15.5-1.9l-10.3-1.6l-10.3-2.1l-10.3-2.6l-10.4-3.5l-6.5-2.6l-9.8-5.2l-7.4-5.1l-6-5.2l-4.7-5.1l-4-5.2l-3.4-5.1l-5.2-10.3l-4-10.3l-3-10.3l-2.7-12.5l-2.2-13.3l-1.9-15.4l-1.4-15.4l-1.9-36.1l-1.2-46.3l-0.6-66.9h-236.4l0.2 128.7l0.5 82.3l0.9 61.8l1.6 46.3l1.2 20.6l1.6 20.6l2.1 19.8l1.6 11.1l2.7 15.5l2.3 10.2l3.7 13.5l4.5 12.3l5.9 12.5l4.8 8.1l5.5 7.3l5.1 5.8l8.2 7.5l6.9 5.1l8.6 5.2l10.7 5.1l12.1 4.5l10.3 3l11.3 2.8l19.7 3.5l11.1 1.7l19.9 2l20.6 1.7z"/>
<path fill="#ffff4d" d="M573.7 588.6l44.4 1.1l56.8 0.6l196.1 0.6v-231.1l-67.1-0.5l-46.5-1.1l-36.1-1.8l-15.5-1.2l-15.5-1.8l-11.2-1.6l-14.6-2.9l-10.3-2.7l-10.3-3.5l-10.3-4.7l-5.2-2.9l-5.8-3.9l-6.2-5.1l-5-5.2l-4.1-5.1l-4.7-7.3l-5.2-10.4l-3.1-8.1l-3.1-10.3l-2.3-10.3l-2.7-15.4l-1.9-15.5l-1.4-15.4l-2-36l-1.2-46.4l-0.6-72h-231.7l0.2 133.8l0.5 82.4l1 61.8l1.5 41.1l1.3 20.6l1.6 20.6l1.3 13.5l2.4 17.4l2.8 15.7l3.6 15.2l3.2 10.3l3.8 10.3l4.9 10.5l5.1 8.7l5.2 7.2l3.8 4.5l5.1 5.1l5.9 5.2l7.2 5.1l8.8 5.2l11.1 5.1l14.6 5.2l10.6 2.8l10.3 2.4l20.7 3.4l15.4 2l20.7 1.9l25.8 1.7z"/>
<path fill="#f4ff58" d="M598 588.6l97.5 1.2l175.5 0.4v-226.4l-72.3-0.6l-51.6-1.3l-36.1-2l-15.5-1.4l-15.5-2l-10.3-1.7l-13.8-3l-6.9-1.9l-10.3-3.6l-10.2-4.8l-5.3-3.1l-5.1-3.6l-4.5-3.6l-5.2-5.1l-4.3-5.2l-3.6-5.1l-3.1-5.3l-5.1-11.2l-3.3-9.3l-2.8-10.3l-2.1-10.3l-2.5-15.4l-1.7-15.5l-1.3-15.4l-1.9-36l-1-46.4l-0.6-72h-227.1l0.3 144.1l0.6 87.5l1.2 56.6l2.2 46.4l2.5 32.2l2.5 19.3l2.7 16.5l3.2 14.3l2.8 10.3l4.3 12.3l5.2 11.5l5.1 9.1l6 8.3l4.4 5.2l5.1 5.1l6.2 5.2l7.4 5.1l9 5.2l11.5 5.1l12.4 4.3l10.3 2.8l14.4 3.2l16.6 2.7l19.3 2.5l22 1.8l20.6 1.3z"/>
<path fill="#e9ff63" d="M635.8 588.6l85.5 0.7l149.7 0.3v-221.9l-72.3-0.5l-51.6-1.2l-36.1-1.9l-15.5-1.3l-15.5-1.8l-10.3-1.6l-12.7-2.5l-8-2l-10.3-3.2l-10.3-4.3l-5.2-2.7l-5.1-3.1l-5.2-3.8l-5.2-4.5l-5.1-5.4l-5.2-7l-5.1-8.8l-3.1-6.6l-3.7-10.3l-2.9-10.3l-2.2-10.3l-2.5-15.5l-1.8-15.4l-1.3-15.5l-1.9-36l-1.2-51.5l-0.5-72h-222.5l0.3 144.1l0.6 87.5l1.3 56.6l2.1 46.4l1.5 20.6l1.6 15.4l2 15.5l2.5 15.4l4.5 19.6l3.6 11.3l4 10.3l5 10.3l2.9 5.2l3.4 5.1l6.9 8.7l6.8 6.7l6.3 5.2l7.6 5.2l10.3 5.6l10.9 4.6l16 5.2l14.4 3.4l10.3 2l20.7 3l20.6 2.2l25.8 1.8l25.9 1.2l30.9 1z"/>
<path fill="#deff6e" d="M721.7 588.6l149.3 0.3v-217.4l-77.4-0.5l-51.6-1.2l-36.2-1.9l-15.5-1.4l-15.4-1.8l-10.4-1.6l-10.3-2.1l-10.3-2.6l-10.3-3.3l-10.4-4.5l-7.1-3.9l-7.3-5.2l-6.2-5.5l-5.2-5.8l-5.1-7.3l-4-7.1l-4.5-10.3l-3.4-10.3l-2.6-10.3l-2-10.3l-2.3-15.5l-1.7-15.4l-1.2-15.5l-1.7-36l-1.1-51.5l-0.5-72h-217.9l0.2 148.8l0.8 88l1.6 61.7l1.2 25.8l1.6 25.6l2.1 20.7l2.8 20.6l2.9 15.5l2.5 10.9l4.6 14.8l4 10.3l5.1 10.3l6.5 10.3l4 5.1l4.6 5.2l7.4 6.8l4.4 3.5l5.9 3.9l10.3 5.7l13.7 5.8l12.1 3.9l10.4 2.6l18.7 3.8l22.5 3.1l20.7 2.1l41.3 2.4l31 1l36.1 0.8z"/>
<path fill="#d2ff79" d="M530.5 583.5l25.6 1.4l25.8 1l62 1.3l87.7 0.7l139.4 0.3v-212.9l-67.1-0.4l-46.5-0.8l-36.1-1.3l-31-2.1l-15.4-1.7l-10.4-1.5l-10.3-1.9l-10.3-2.3l-5.2-1.4l-10.3-3.5l-5.2-2.2l-8.7-4.4l-7.8-5.1l-6.2-5.2l-4.9-5.1l-3.3-4.1l-5.2-7.8l-4.5-8.7l-3.9-10.3l-3.1-10.3l-3.4-15.5l-2.3-15.4l-1.7-15.5l-1.6-20.6l-1.1-20.5l-1.4-56.7l-0.6-82.3h-213.4l0.2 123.5l0.5 82.4l1 61.8l1.6 46.3l2.3 36l2 20.6l2 15.5l1.8 10.3l3.2 15.4l5.6 19.5l5.2 12.9l4.5 8.8l5.8 9.1l4.9 6.3l5.4 5.9l4.8 4.4l5.5 4.3l9.2 6l6.3 3.4l5.2 2.4l11.4 4.5l14.4 4.3l10.3 2.5l15.5 2.9l10.3 1.6l20.7 2.3z"/>
<path fill="#c7ff84" d="M542.9 583.5l49.4 1.9l61.9 1.2l82.6 0.5l134.2 0.3v-208.4l-67.1-0.3l-51.6-0.9l-36.1-1.3l-31-2.2l-15.5-1.7l-10.3-1.6l-10.4-1.9l-10.3-2.4l-10.3-3.2l-5.2-1.9l-10-4.7l-5.5-3.1l-5.1-3.6l-4.3-3.5l-5.3-5.2l-5.9-7.4l-5-8l-4.8-10.3l-3.6-10.3l-2.8-10.3l-3.1-15.5l-2.2-15.4l-1.5-15.5l-1.5-20.6l-0.9-20.5l-1.4-56.7l-0.5-82.3h-208.9l0.2 128.7l0.5 82.3l1.1 61.8l1.7 46.3l2.1 30.9l3.5 31.9l2.4 14.5l2.7 13.5l3.3 12.2l3.4 10.3l3.7 9.3l5.1 10.3l5.2 8.2l6.4 8.2l4.8 5.2l4.3 3.9l8.2 6.4l8.3 5.1l9.3 4.7l10.3 4.1l10.3 3.4l12.3 3.3l13.5 2.7l14.5 2.4l16.5 2l20.7 1.9z"/>
<path fill="#bcff8f" d="M558 583.5l44.6 1.4l61.9 1l82.6 0.5l123.9 0.2v-203.9l-72.3-0.4l-51.6-0.9l-36.1-1.3l-31-2.3l-15.5-1.8l-10.3-1.5l-10.3-2l-10.3-2.5l-8.9-2.8l-6.6-2.5l-5.8-2.6l-9.1-5.2l-7-5.1l-5.5-5.1l-4.6-5.2l-3.8-5.1l-3.1-5.2l-5-10.3l-3.8-10.3l-2.9-10.3l-3.1-15.4l-2.3-15.5l-1.6-15.4l-1.5-20.6l-1-20.6l-1.3-56.6l-0.6-87.5h-204.5l0.3 123.5l0.5 82.4l0.9 61.8l1.6 46.3l1.3 20.6l1.6 20.6l2.2 20.3l1.6 10.6l2.7 15.4l2.3 10.3l3.7 13.2l4.6 12.5l5.7 12.2l5.1 8.4l5.2 7.1l5.2 5.8l8.4 7.7l6.9 5.2l8.6 5.1l10.8 5.2l11.8 4.4l10.3 3l11.3 2.9l19.7 3.5l10.6 1.6l20.3 2.2l20.7 1.6z"/>
<path fill="#b1ff9b" d="M577.5 583.5l45.7 1.1l56.8 0.7l191 0.5v-199.5l-72.3-0.3l-51.6-0.8l-36.1-1.3l-31-2.1l-25.8-3.1l-10.3-1.8l-10.3-2.3l-8-2.2l-7.5-2.6l-6.3-2.6l-9.9-5.1l-7.5-5.2l-7.3-6.4l-5.2-6l-5.6-8.1l-5.2-10.3l-3.9-10.3l-3-10.3l-3.2-15.5l-2.3-15.4l-1.7-15.5l-1.5-20.6l-1-20.5l-1.4-56.7l-0.6-92.6h-200.1l0.2 128.7l0.6 82.3l1 61.8l1.6 41.2l1.2 20.6l1.7 20.6l1.3 13.1l2.5 17.8l2.6 15l3.9 15.8l3.2 10.3l3.8 10.3l4.6 9.9l5.2 8.8l5.1 7.2l4.3 5l5.1 5.2l6.1 5.2l7.2 5.1l8.8 5.1l11.1 5.2l14.2 5l10.4 2.8l10.6 2.5l20.3 3.4l15.5 2l20.7 1.9l25.8 1.7z"/>
<path fill="#a6ffa6" d="M605 583.5l95.7 1.2l170.3 0.4v-195.2l-72.3-0.3l-51.6-0.8l-41.3-1.4l-30.9-2.1l-15.5-1.7l-10.4-1.5l-10.3-1.9l-10.3-2.4l-10.3-3.1l-6.4-2.3l-9.1-4.2l-5.2-3l-5.1-3.4l-5.2-4.2l-5.2-5.1l-5.1-6.3l-6.1-9.8l-4.7-10.3l-3.5-10.3l-2.8-10.3l-3-15.5l-2.1-15.4l-1.5-15.5l-1.4-20.6l-1-20.5l-1.2-56.7l-0.6-92.6h-195.7l0.3 139l0.6 82.3l1.1 56.7l2 46.3l2.8 36l2.6 20.6l2.5 15.3l3.6 15.6l2.9 10.3l3.9 11.3l5.1 11.5l5.2 9.1l6.6 9.3l4.5 5.1l4.4 4.4l5.1 4.5l9.3 6.6l9.2 5.1l11.5 5.2l11.3 3.9l10.4 2.8l15.6 3.6l15.3 2.5l20.8 2.6l20.5 1.8l20.7 1.3z"/>
<path fill="#9bffb1" d="M650.9 583.5l85.9 0.6l134.2 0.2v-190.9l-77.4-0.3l-51.6-0.8l-41.3-1.4l-31-2.2l-15.5-1.8l-10.3-1.5l-10.3-1.9l-10.4-2.5l-10.3-3.2l-5.2-2l-7.5-3.4l-7.9-4.6l-7.7-5.7l-7.8-7.8l-5.8-7.6l-4.5-8l-5.2-12l-3.5-10.9l-2.4-10.3l-2.8-15.5l-2-15.4l-1.4-15.5l-1.3-20.6l-1-25.7l-1.1-56.6l-0.4-87.5h-191.4l0.2 139l0.6 82.3l1.4 61.8l1 25.7l1.5 25.8l1.7 20.6l2.5 20.6l2.2 15.1l3.4 15.8l2.6 10.2l4.4 13.4l5.1 12.1l5.2 9.4l5.1 7.6l7.7 9l7.8 7.3l3.9 3l6.5 4.4l10.6 5.9l12.1 5.2l13.4 4.3l10.3 2.7l15.8 3.3l15.2 2.2l20.6 2.5l15.5 1.3l25.8 1.6l25.8 1.1z"/>
<path fill="#8fffbc" d="M804.7 583.5h66.3v-186.6l-77.4-0.3l-51.6-0.7l-41.3-1.4l-31-2l-25.8-3l-10.3-1.8l-10.4-2.3l-10.3-2.9l-10.3-3.8l-5.2-2.4l-7.1-3.9l-8.4-6l-5.1-4.6l-4.4-4.9l-5.9-8.3l-4-7.1l-4.4-10.3l-3.4-10.3l-2.5-10.3l-2.9-15.4l-2-15.5l-1.5-15.8l-1.3-20.2l-1.1-25.7l-1.1-56.7l-0.4-92.6h-187.2l0.4 144.1l0.8 87.5l0.7 36.1l1.1 30.8l1.2 25.8l1.5 20.6l2.1 20.6l2.6 19.5l4.4 21.7l2.8 10.2l3.2 10.3l4.2 10.3l2.5 5.2l5.8 10.3l3.5 5.1l4.6 5.8l4.2 4.5l5.5 5.2l6.6 5.1l9.5 6.1l8.3 4.2l7.2 3.1l10.3 3.7l15.5 4.3l20.7 4.2l15.4 2.2l20.7 2.2l20.6 1.6l31 1.6l31 1l77.4 1.3z"/>
<path fill="#84ffc7" d="M542.7 578.3l49.6 2.2l61.9 1.2l82.6 0.7l134.2 0.3v-182.3l-77.4-0.3l-51.6-0.7l-41.3-1.2l-31-1.9l-15.5-1.5l-13.8-1.8l-12-2.1l-10.3-2.4l-10.4-3l-7.5-2.8l-7.9-3.7l-5.2-2.9l-5.2-3.4l-5.1-4.1l-5.2-5l-5.5-6.7l-3.4-5.1l-2.9-5.1l-4.6-10.3l-3.5-10.3l-2.7-10.3l-2.9-15.5l-2.1-15.4l-1.5-15.5l-1.4-20.6l-1.1-25.7l-1.2-61.8l-0.4-92.6h-182.8l0.3 123.5l0.5 82.4l1.1 61.8l1.7 46.3l2.2 30.9l1.5 15.4l2.2 18.2l2.2 12.7l3 14.4l3.1 11.3l3.4 10.3l3.8 9.6l5.2 10.2l5.1 8.1l5.2 6.8l6 6.5l4.3 4l5.2 4.1l10.3 6.9l5.2 2.7l5.9 2.9l13.2 5.2l17 4.9l10.3 2.2l15.5 2.8l10.3 1.4l20.7 2.3z"/>
<path fill="#79ffd2" d="M558.6 578.3l44 1.6l61.9 1.1l82.6 0.5l123.9 0.3v-178l-82.6-0.3l-51.6-0.7l-41.3-1.3l-31-1.9l-15.5-1.5l-15.4-2.2l-10.4-1.9l-10.3-2.4l-10.3-3.2l-5.2-1.9l-8.3-3.8l-7.2-4.1l-8.3-6.2l-7.1-7.2l-5.2-6.7l-5.2-8.7l-5.1-11.8l-3.8-11.9l-2.4-10.3l-2.7-15.5l-2-15.4l-1.4-15.5l-1.2-20.6l-1.1-25.7l-1.1-61.8l-0.3-92.6h-178.5l0.2 123.5l0.6 82.4l1.1 61.8l1.6 43.8l2.8 38.5l2.2 20.6l1.6 10.3l2.8 15.5l2.3 10.3l3.8 13.2l4.6 12.5l5.7 12l5.1 8.5l5.2 6.9l5.2 5.9l8.6 7.9l6.9 5.1l8.6 5.2l10.6 5.1l11.7 4.4l10.4 3.1l10.9 2.8l14.9 2.8l14.7 2.4l16.2 1.8l20.7 1.8z"/>
<path fill="#6effde" d="M579.4 578.3l43.8 1.2l56.8 0.7l191 0.7v-173.7l-82.6-0.3l-56.8-0.7l-41.3-1.3l-30.9-2l-15.5-1.6l-15.5-2.2l-10.3-2l-10.4-2.5l-5.4-1.6l-10-3.7l-10.4-5.1l-5.1-3.2l-5.2-3.9l-5.1-4.6l-4.8-5.3l-5.6-7.8l-4.2-7.6l-4.4-10.3l-3.3-10.3l-2.5-10.3l-2.8-15.4l-2-15.5l-1.5-15.4l-1.3-20.6l-1-25.8l-1.1-61.7l-0.4-97.8h-174.2l0.3 128.7l0.5 82.3l1.2 61.8l1.7 41.2l1.4 20.6l1.8 20.6l1.8 15.4l2.4 15.5l2 10.3l3.8 15.4l3.2 10.3l3.9 10.3l4.4 9.3l5.1 8.8l5.5 7.6l4.9 5.6l4.7 4.7l6 5.2l7.3 5.1l8.8 5.2l11.2 5.1l13.6 4.9l10.3 2.8l11.1 2.6l19.9 3.4l15.5 2.1l20.6 1.9l25.8 1.8z"/>
<path fill="#63ffe9" d="M609.5 578.3l44.7 0.8l51.6 0.5l165.2 0.4v-169.4l-87.7-0.3l-56.8-0.8l-41.3-1.3l-31-2l-15.5-1.7l-10.3-1.4l-10.3-1.8l-13.4-3.2l-7.3-2.2l-10.3-3.9l-8.3-4.2l-7.2-4.6l-6.9-5.7l-5-5.1l-3.6-4.4l-5.1-7.9l-4.2-8.3l-4-10.3l-3-10.3l-2.3-10.3l-2.6-15.4l-1.8-15.5l-1.3-15.4l-1.3-20.6l-0.9-25.8l-1.1-61.7l-0.3-97.8h-169.9l0.3 133.8l0.6 82.4l1.1 56.6l2.1 46.3l2.9 36.1l2.7 20.6l2.3 14.1l5.2 21.9l5.1 15.4l5.2 11.6l5.1 9.2l5.2 7.4l6.7 7.9l8.8 8.1l10.2 7.3l9.2 5.2l11.6 5.1l10.3 3.5l10.3 3l16.8 3.8l19.3 3.1l16.7 2.1l19.5 1.6l20.6 1.4z"/>
<path fill="#58fff4" d="M663.1 578.3l78.9 0.6l129 0.2v-165.2l-87.7-0.2l-56.8-0.7l-41.3-1.3l-31-1.9l-15.5-1.5l-15.5-2.1l-10.3-1.9l-10.3-2.4l-10.3-3.1l-5.2-1.9l-8.6-3.9l-8.7-5.2l-6.7-5.1l-7-7l-5.1-6.7l-5.2-8.7l-5.2-11.8l-3.7-12.1l-2.5-10.3l-2.6-15.5l-1.9-15.4l-1.4-15.5l-1.3-20.6l-0.9-25.7l-1.1-61.8l-0.4-102.9h-165.6l0.3 133.8l0.6 82.4l1.4 61.8l1.1 25.7l1.5 25.7l1.7 20.6l2.5 20.6l2 13.1l3.8 17.8l2.7 10.3l3.8 11.7l5.2 12.2l5.1 9.6l5.2 7.8l4 5l4.7 5.2l6.8 6.3l5.1 4l5.2 3.5l12.2 6.8l12.2 5.1l11.8 3.8l10.3 2.8l15.5 3.3l10.3 1.6l20.6 2.7l20.7 2l25.8 1.6l31 1.3z"/>
<path fill="#4dffff" d="M539.7 573.2l47.4 2.4l61.9 1.5l82.6 0.8l139.4 0.3v-161l-87.7-0.2l-56.8-0.6l-41.3-1.2l-36.2-2.1l-15.4-1.6l-15.5-2.2l-10.4-1.9l-10.3-2.6l-5.3-1.5l-10.2-3.7l-10.3-5.1l-5.1-3.2l-5.2-3.8l-5.2-4.6l-4.8-5.4l-5.5-7.7l-4.3-7.7l-4.3-10.3l-3.3-10.3l-3.6-15.4l-2.4-15.5l-1.8-15.4l-1.2-15.5l-1.2-20.6l-0.9-25.7l-1-61.8l-0.3-102.9h-161.4l0.3 123.5l0.5 77.2l1 56.7l1.7 46.3l2.3 36l2.2 20.6l2.1 15.5l5.1 25.7l5.3 18.1l5.2 12.9l5.1 10l5.2 8l5.2 6.7l5.1 5.7l6.1 5.5l6.7 5.2l8.1 5.1l10 5.2l10.4 4.2l10.4 3.4l10.3 2.9l25.8 5.1l20.6 2.6z"/>
<path fill="#4df4ff" d="M555.7 573.2l46.9 1.9l61.9 1.2l82.6 0.6l123.9 0.3v-156.7l-92.9-0.2l-56.8-0.6l-41.3-1.2l-20.6-1.1l-15.5-1.1l-15.5-1.6l-10.3-1.5l-10.4-1.8l-13-3l-7.6-2.2l-10.3-4l-8.3-4.1l-7.2-4.6l-7-5.7l-5-5.1l-3.5-4.4l-5.2-8l-4.1-8.2l-3.9-10.3l-3-10.3l-2.3-10.3l-2.6-15.4l-1.8-15.5l-1.3-15.4l-1.2-20.6l-0.9-25.8l-1-61.7l-0.3-108.1h-157.1l0.3 123.5l0.6 77.2l1.1 61.8l1.7 46.3l2.3 30.9l3.5 30.9l4.9 26.4l4 14.8l3.5 10.3l2.8 6.9l5.1 10.5l5.2 8.4l8 10.2l7.5 7.5l10.2 8l8.5 5.1l7.1 3.6l10.3 4.3l10.4 3.5l14.8 4.1l11 2.2l17.2 2.9l13.7 1.7l20.7 2z"/>
<path fill="#4de9ff" d="M576.7 573.2l46.5 1.4l56.8 0.8l191 0.7v-152.2l-92.9-0.3l-56.8-0.5l-41.3-1.1l-36.1-2.1l-15.5-1.5l-15.5-2.1l-10.3-1.8l-10.3-2.4l-10.4-3.1l-5.1-1.9l-8.5-3.8l-8.7-5.2l-6.8-5.1l-7-7l-5.2-6.7l-5.1-8.8l-5.2-12l-3.7-11.8l-2.3-10.3l-2.7-15.5l-1.9-15.4l-1.6-20.6l-1.2-20.6l-0.8-25.8l-0.9-61.7l-0.3-108.1h-152.7l0.2 123.5l0.6 77.2l1.1 61.8l1.6 41.2l1.3 20.6l1.7 20.6l1.6 15.1l2.4 15.8l2.8 15.3l2.5 10.4l2.9 10.3l4.9 13.5l5.1 11l5.2 8.8l5.2 7.2l5.1 6.1l5 4.9l5.4 4.6l7.9 5.7l8.8 5.1l11 5.2l13.6 4.9l10.3 2.8l10.4 2.6l20.5 3.6l10.7 1.5l20.3 2.1l20.7 1.6z"/>
<path fill="#4ddeff" d="M607.1 573.2l41.9 0.8l51.7 0.6l170.3 0.5v-148l-92.9-0.1l-61.9-0.7l-46.5-1.3l-31-1.9l-15.5-1.5l-15.5-2.2l-10.3-1.9l-10.3-2.5l-5.2-1.5l-10.3-3.7l-10.3-5l-5.2-3.2l-5.1-3.9l-5.2-4.6l-4.8-5.3l-5.5-7.8l-4.2-7.6l-4.3-10.3l-3.3-10.3l-3.5-15.4l-2.4-15.5l-1.8-15.4l-1.5-20.6l-1-20.6l-0.8-25.8l-0.9-61.7l-0.2-108.1h-148.4l0.3 128.7l0.6 82.3l1 52.2l2.3 50.8l2.9 35.6l2.1 15.9l3.1 19.1l5.3 22.1l5 14.7l4.9 11l5.4 9.7l5.2 7.5l7.2 8.5l8.3 7.6l10.3 7.5l9.7 5.5l11.7 5.2l9.6 3.3l10.3 3l17 4l19.1 3.1l15.5 2l20.6 1.8l20.7 1.4z"/>
<path fill="#4dd2ff" d="M661.9 573.2l80.1 0.6l129 0.3v-143.7l-98.1-0.2l-61.9-0.6l-41.3-1.1l-20.7-1.1l-15.4-1.1l-15.5-1.6l-15.5-2.2l-10.3-2l-10.4-2.6l-10.3-3.3l-5.1-2.1l-8.2-4.1l-7.3-4.6l-7-5.7l-4.9-5.1l-3.6-4.5l-5.2-8l-4-8.1l-3.9-10.3l-3-10.3l-2.3-10.3l-2.5-15.4l-1.7-15.5l-1.7-20.6l-1-20.6l-0.8-25.7l-0.9-66.9l-0.2-108.1h-144.1l0.3 128.7l0.7 82.3l1.4 61.8l1.1 25.7l1.6 25.8l1.8 20.6l2.6 20.6l1.8 11.8l4 19.1l2.9 10.3l3.4 10.4l5.1 12.2l5.2 9.6l5.2 7.9l5.1 6.5l5.2 5.5l4.8 4.5l6.6 5.1l7.8 5.2l11.8 6.1l10.3 4.2l16.2 5.1l14.8 3.4l10.3 2l20.6 2.9l20.7 2.2l25.8 1.8l31 1.5z"/>
<path fill="#4dc7ff" d="M547.9 568l23.7 1.4l25.8 1.1l62 1.4l82.6 0.8l129 0.3v-139.3l-103.2-0.2l-62-0.6l-46.4-1.4l-31-2l-15.5-1.6l-15.5-2.3l-10.3-2.1l-10.3-2.7l-6.6-2.1l-8.9-3.6l-5.2-2.5l-5.1-3l-5.2-3.6l-5.2-4.4l-3.5-3.5l-4.3-5.1l-3.6-5.2l-3-5.1l-2.6-5.2l-4.1-10.3l-3.1-10.3l-3.3-15.4l-2.3-15.4l-1.6-15.5l-1.5-20.6l-1.7-46.3l-0.8-66.9l-0.2-108.1h-139.7l0.3 118.4l0.6 77.2l1 56.6l1.7 46.3l1.4 23.6l1.1 12.5l1.6 15.4l2.5 19l5.1 25.9l5.2 17.5l5.1 13l5.2 10.1l5.2 8.3l5.1 6.7l5.2 5.8l7.6 7l6.8 5.1l8.3 5.2l10.1 5.1l13 5.2l11 3.3l10.3 2.7l15.5 3.1l10.3 1.7l20.7 2.5z"/>
<path fill="#4dbcff" d="M567.5 568l45.4 1.8l62 1.1l77.4 0.6l118.7 0.3v-134.8l-103.2-0.1l-62-0.6l-46.4-1.3l-20.7-1.1l-15.5-1.2l-15.5-1.6l-13.5-2.1l-12.3-2.5l-9.9-2.6l-10.7-3.8l-5.2-2.3l-7.7-4.2l-7.4-5.2l-5.7-5.1l-4.7-5.2l-3.8-5.1l-3.2-5.2l-5-10.3l-3.7-10.3l-2.7-10.3l-3.1-15.4l-2.1-15.4l-1.5-15.5l-1.4-20.6l-1.5-46.3l-0.8-66.9l-0.1-108.1h-135.2l0.3 118.4l0.6 77.2l1.1 61.8l1.8 45.2l2.9 37.1l2.3 19.9l1.7 11l2.9 15.5l2.5 10.3l3.2 11l5.1 13.8l5.2 10.7l5.2 8.6l5.3 7.3l5 5.8l4.5 4.5l6 5.2l7.2 5.1l8.6 5.2l10.7 5.1l13.9 5.2l11 3.1l10.4 2.5l15.4 2.9l11.1 1.8l19.9 2.2z"/>
<path fill="#4db1ff" d="M595 568l43.7 1.2l56.8 0.7l175.5 0.7v-130.3l-103.2-0.1l-62-0.5l-46.4-1.2l-36.2-2.1l-15.5-1.5l-15.4-2.2l-10.4-2l-10.3-2.5l-10.3-3.3l-5.2-2.1l-8.3-4.1l-8.1-5.1l-6.2-5.2l-4.9-5.1l-3.4-4.3l-5.2-8l-4.1-8.3l-3.9-10.3l-2.9-10.3l-3.1-15.4l-2.2-15.5l-1.5-15.4l-1.4-20.6l-1.6-46.4l-0.8-66.9l-0.1-113.2h-130.7l0.3 123.5l0.6 77.2l1.3 61.8l1.8 41.2l1.9 25.7l1.9 19.1l4.1 27.3l2.1 10.3l4.1 15.8l5.1 14.8l2.5 5.4l2.7 5.9l5.5 9.5l7.5 10.3l7.7 8.2l8.5 7.3l7.4 5.1l9.1 5.2l11.4 5.1l14.8 5.2l10.7 2.8l10.3 2.4l20.7 3.4l11.9 1.7l24.2 2.2l25.8 1.8z"/>
<path fill="#4da6ff" d="M641 568l85.5 1l144.5 0.4v-125.8l-108.4-0.1l-61.9-0.5l-46.5-1.2l-20.6-1l-15.5-1.1l-15.5-1.6l-15.5-2.2l-10.3-2l-10.3-2.7l-6.9-2.2l-8.6-3.4l-5.2-2.5l-5.2-3l-5.1-3.5l-5.2-4.3l-3.8-3.9l-4.3-5.1l-3.6-5.2l-3-5.1l-2.5-5.2l-4-10.3l-3-10.3l-3.3-15.4l-2.2-15.4l-1.6-15.5l-1.4-20.6l-1.7-46.3l-0.7-66.9l-0.2-118.4h-126.1l0.4 139l0.9 82.3l1.4 51.5l2.5 46.3l1.4 16l2.4 20.1l2.7 17.7l2.8 13.2l2.6 10.3l4.9 15.3l5.2 12l4.6 8.7l5.7 8.7l5.3 6.7l5.1 5.4l5.1 4.8l6.8 5.3l7.8 5.1l11.2 5.9l10.5 4.4l16 5.2l14.8 3.5l10.3 2l15.5 2.3l20.7 2.5l20.6 1.6l25.8 1.5z"/>
<path fill="#4d9bff" d="M792.4 568l78.6 0.1v-121.2l-113.6-0.1l-61.9-0.5l-46.5-1.2l-20.6-1l-15.5-1.1l-15.5-1.6l-14-2.1l-11.8-2.3l-10.3-2.7l-10.3-3.6l-5.2-2.3l-8.4-4.5l-7.1-5l-5.9-5.3l-4.6-5.2l-3.7-5.1l-3.2-5.2l-4.9-10.3l-3.6-10.3l-2.7-10.3l-3-15.4l-2-15.4l-1.4-15.5l-1.3-20.6l-1.5-46.3l-0.7-66.9l-0.1-118.4h-121.5l0.3 133.8l1 82.4l1.7 61.8l1.3 25.7l1.5 20.6l2.1 20.6l2.5 18.5l4.5 22.7l2.8 10.3l3.2 10.3l4.1 10.2l2.4 5.2l5.6 10.3l3.3 5.1l5.1 6.8l8.1 8.7l7.4 6.4l5.2 3.9l8.3 5.1l10.2 5.2l12.9 5.1l15 4.5l15.5 3.5l15.5 2.8l20.6 2.6l21.5 2.1l25 1.5l30.9 1.3l72.3 1.6z"/>
<path fill="#4d8fff" d="M574.1 562.9l49.1 1.9l56.8 1l77.4 0.6l113.6 0.3v-116.4l-113.6-0.1l-61.9-0.4l-46.5-1.1l-36.1-2l-15.5-1.4l-15.5-2.1l-10.3-1.9l-10.3-2.4l-10.3-3.3l-10.4-4.3l-5.1-2.8l-7.1-4.6l-3.2-2.6l-5.2-4.9l-5.2-6.1l-5.1-7.9l-4.6-9.4l-3.8-10.3l-2.8-10.3l-3-15.5l-2.1-15.4l-1.5-15.4l-1.3-20.6l-1.5-46.4l-0.6-66.9l-0.2-123.5h-116.7l0.3 113.2l0.6 77.2l1.1 56.7l1.9 48.9l3.1 38.6l2 17.7l2.2 13.2l3 15.6l2.6 10.1l2.5 8.9l5.2 13.8l5.2 10.8l5.1 8.8l5.2 7.2l6.1 7.1l5.3 5.2l4.1 3.5l9.2 6.8l8.8 5.1l10.8 5.2l13.9 5.1l8.9 2.6l10.1 2.6l15.7 3l13.2 2.1l17.8 2.1z"/>
<path fill="#4d84ff" d="M607.4 562.9l41.6 1l56.8 0.8l165.2 0.6v-111.6l-113.6-0.1l-61.9-0.3l-46.5-1l-36.1-1.8l-15.5-1.3l-15.5-1.9l-10.3-1.7l-10.3-2.2l-10.3-2.9l-10.4-3.9l-5.1-2.4l-5.2-2.9l-5.1-3.4l-5.2-4.2l-5-5l-4.2-5.1l-3.4-5.2l-2.9-5.1l-2.5-5.2l-3.9-10.3l-2.9-10.3l-3.1-15.4l-2.1-15.4l-1.5-15.5l-1.3-20.6l-1.5-46.3l-0.7-66.9l-0.1-128.7h-111.9l0.4 123.5l0.7 82.4l1.4 57l2.1 40.8l3 35.2l2.3 16.3l2.9 17l3.3 13.9l2.8 10.3l4.2 11.9l5.2 11.5l5.1 9.3l5.8 8.4l4.6 5.7l4.3 4.6l5.5 5.2l6.4 5.1l9.6 6.3l7.4 4l13.2 5.8l13.5 4.5l17.5 4.4l10.3 2l20.7 3.1l15.4 1.8l20.7 1.7z"/>
<path fill="#4d79ff" d="M672 562.9l80.3 0.7l118.7 0.3v-106.8h-118.7l-62-0.4l-46.4-0.9l-36.2-1.8l-15.4-1.3l-15.5-1.9l-10.3-1.8l-10.4-2.2l-10.3-3l-10.3-4l-5.2-2.6l-5.1-3l-5.2-3.6l-5.2-4.4l-6.7-7.5l-3.7-5.1l-3-5.2l-4.7-10.3l-3.4-10.3l-2.6-10.3l-2.8-15.4l-1.9-15.4l-1.4-15.5l-1.2-20.6l-1.3-46.3l-0.6-66.9v-128.7h-107l0.3 123.5l0.7 77.2l1.6 61.8l1.2 25.7l1.7 25.8l2 20.6l2.7 20.6l1.8 10.3l3.3 15.4l1.3 5.2l5 15.9l5.2 12.4l5.1 9.9l5.2 8.2l8.2 10.2l7.3 7.2l10.2 8.2l8.2 5.2l9.9 5.1l12.5 5.2l16.5 5.1l25.3 5.4l20.6 2.9l20.7 2.3l25.8 1.7l25.8 1.3l31 1z"/>
<path fill="#4d6eff" d="M570.8 557.7l47.3 2.2l56.8 1.3l77.4 0.8l118.7 0.3v-101.7h-123.9l-61.9-0.4l-46.5-0.9l-36.1-1.7l-15.5-1.4l-15.5-1.9l-10.3-1.8l-12.6-2.9l-8.1-2.4l-10.3-4.2l-7.1-3.7l-8.4-5.8l-5.1-4.6l-4.5-5l-3.8-5.2l-3.2-5.1l-4.8-10.3l-3.6-10.3l-2.6-10.3l-2.9-15.5l-1.9-15.4l-1.3-15.4l-1.2-20.6l-1.3-46.4l-0.6-66.9v-133.8h-102l0.4 118.4l0.7 77.2l1.3 56.6l2.2 46.3l3.3 36.1l1.9 15l1.9 10.7l3.2 16.3l2.6 9.5l2.6 8.7l4.5 11.9l5.8 12.3l4.9 8.2l5.5 7.6l6.8 7.9l8.6 8l10 7.4l8.7 5.2l7.2 3.5l5.1 2.3l11.8 4.5l18.3 5.1l11.2 2.3l15.5 2.8l10.3 1.3l20.7 2.3z"/>
<path fill="#4d63ff" d="M604.6 557.7l44.4 1.3l51.7 0.8l170.3 0.8v-96.5l-129 0.1l-62-0.3l-46.4-0.9l-36.2-1.8l-15.5-1.3l-15.4-2l-15.5-2.8l-10.4-2.7l-8.1-2.8l-7.3-3.1l-5.2-2.7l-5.2-3.2l-5.1-4l-5.2-4.8l-6.4-7.9l-3.2-5.2l-2.7-5.1l-4.3-10.3l-3.1-10.3l-2.3-10.3l-2.6-15.5l-1.7-15.4l-1.2-15.4l-1-20.6l-1.1-46.4l-0.5-66.9l0.1-133.8h-96.8l0.4 118.4l0.7 77.2l1.5 61.8l1.9 36l1.6 20.6l2 20.3l2.3 15.7l2.8 16.2l5.2 20.5l5.2 14.8l4.6 10.3l5.7 10.4l5.2 7.6l6.2 7.7l4.1 4.5l5.1 4.8l7.8 6.2l7.6 5.1l9.3 5.2l11.4 5.1l14.9 5.2l11 2.8l10.3 2.5l20.7 3.5l10.5 1.5l25.6 2.4z"/>
<path fill="#4d58ff" d="M671.1 557.7l81.2 0.8l118.7 0.4v-91.1l-134.2 0.1l-67.1-0.4l-46.5-0.9l-20.6-0.9l-15.5-1.1l-15.5-1.5l-15.5-2.2l-10.3-2l-10.3-2.7l-10.3-3.7l-6.4-2.9l-8.6-5.1l-5.7-4.5l-5.9-5.8l-4.4-5.7l-3-4.6l-2.8-5.2l-4.3-10.3l-3.1-10.3l-2.4-10.3l-2.5-15.4l-1.7-15.5l-1.2-15.4l-1-20.6l-1.1-46.3l-0.4-66.9l0.1-139h-91.3l0.3 118.4l0.8 80.9l1.9 63.2l1.4 25.7l1.4 20.6l2.2 20.6l2.8 20.6l2 10.3l3.4 15.5l5.6 17.8l5.1 12.5l5.2 10l7.3 11.1l8.2 10l5.5 5.5l4.8 4.1l8.2 6.2l8.2 5.1l9.9 5.2l12.6 5.1l16.5 5.2l23.4 5.1l19.3 2.8l20.6 2.4l25.8 1.9l25.8 1.3z"/>
<path fill="#4d4dff" d="M583.6 552.6l44.8 2l56.8 1.3l77.4 0.7l108.4 0.4v-85.5l-139.4 0.1l-67.1-0.2l-46.4-0.9l-36.2-1.9l-15.4-1.4l-15.5-2.2l-10.4-2l-10.3-2.7l-10.3-3.7l-5.2-2.4l-8-4.6l-6.8-5.1l-5.8-5.8l-5.2-6.8l-4.6-8l-4.4-10.3l-3.1-10.3l-2.3-10.3l-2.5-15.5l-1.7-15.4l-1.1-15.4l-1-20.6l-1-46.4l-0.4-66.9l0.2-144.1h-85.8l0.4 108.1l0.8 77.2l1.3 56.6l2 44.7l3.4 37.7l1.7 14l2.1 11.7l3.1 15.9l2.7 9.9l2.5 8.6l5.1 13.8l5.2 10.8l5.2 8.8l5.1 7.4l5.9 7.2l4.8 5.1l4.8 4.5l7.2 5.8l7.4 5.2l11.2 6.3l8.5 4l13.8 5.1l18.5 5.2l5.7 1.1l15.5 2.9l10.3 1.6l20.6 2.3z"/>
<path fill="#4d4df4" d="M630.8 552.6l38.9 0.9l51.6 0.7l149.7 0.7v-79.6l-206.5 0.1l-46.4-0.7l-36.2-1.5l-15.4-1.2l-15.5-1.9l-10.4-1.7l-10.3-2.2l-10.3-3.1l-10.3-4.3l-7.2-4l-7-5.2l-6.5-6.5l-5.1-6.9l-4.1-7.2l-4.3-10.3l-3.1-10.3l-2.3-10.3l-2.3-15.4l-1.7-15.5l-1-15.4l-0.9-20.6l-0.9-46.3l-0.3-61.8l0.2-154.4h-79.7l0.4 118.4l0.8 77.2l1.2 46.3l2.5 46.3l2.5 29.9l2.3 16.5l2.9 17.5l5.2 21.4l5.1 15.3l5.2 11.9l5.2 9.5l5.1 8l7 9l4.6 5.2l5.3 5.1l6 5.2l6.8 5.1l8 5.2l9.6 5.1l11.9 5.2l15.4 5.1l18.3 4.5l10.4 1.9l20.6 3.1l15.5 1.7l20.6 1.7z"/>
<path fill="#4d4de9" d="M792.1 552.6l78.9 0.2v-73.4l-165.2 0.3l-61.9-0.2l-46.5-0.9l-30.9-1.6l-15.5-1.5l-15.5-2.2l-10.3-2.1l-10.4-3l-10.3-4.1l-7.6-4.2l-6.9-5.1l-6.1-6.1l-5.2-7l-4.2-7.5l-2.3-5.2l-3.4-10.3l-2.5-10.3l-1.9-10.3l-1.9-15.4l-1.3-15.5l-1.4-30.8l-0.8-46.4l0.2-221.3h-73.6l0.5 123.5l1.2 82.4l0.9 30.9l1.4 30.9l1.3 21.7l2 19.4l3.2 25.8l2 10.3l3.2 15.2l5.1 17.4l5.2 13.2l5.2 10.4l5.1 8.6l5.2 7.5l5.1 6.3l8.5 8.9l5.6 5.1l6.4 5.2l7.4 5.1l8.3 5l10.3 5.1l13.7 5.4l17.3 5.1l25.7 5.2l20.7 2.6l24.7 2.5l42.4 2.3l67.1 1.9z"/>
<path fill="#4d4dde" d="M630.3 547.4l39.4 1.1l51.6 0.9l149.7 0.8v-66.6l-227.1 0.4l-46.5-0.5l-30.9-1.1l-15.5-1.1l-15.5-1.7l-10.3-1.6l-10.4-2.3l-10.3-3.1l-6-2.4l-4.3-2.1l-5.1-3l-5.2-3.9l-5.2-5l-5.1-6.6l-3.1-5.1l-4.6-10.3l-3.1-10.3l-2.2-10.3l-2.3-15.5l-1.5-15.4l-1.5-30.9l-0.8-46.3l0.4-236.8h-66.7l0.4 108.1l0.9 77.2l1.4 54.8l2.3 37.9l2.9 32.7l5.2 32.3l5.1 20.5l5.2 14.8l5.2 11.4l5.1 9.3l5.2 8l5.1 6.7l10.4 11.6l7.4 7.1l6.1 5.1l6.8 5.2l8 5.1l9.3 5.2l11.5 5.1l14.8 5.2l18.7 4.7l25.8 4.4l10.3 1.4l20.6 1.9l20.7 1.5z"/>
<path fill="#4d4dd2" d="M826.7 547.4l44.3 0.1v-59.3l-252.9 0.8l-41.3-0.4l-31-1.2l-15.5-1.3l-15.5-1.9l-10.3-1.9l-10.3-2.8l-5.2-1.9l-5.1-2.4l-5.2-3l-5.2-4l-3.1-3.1l-4-5.2l-3-5.1l-2.4-5.2l-1.9-5.1l-2.9-10.3l-1.9-10.3l-1.3-10.3l-1.1-10.3l-1-15.5l-1-30.9l-0.4-41.1l0.9-247.1h-59.6l0.6 113.2l1.3 82.4l1.2 36l1.5 30.9l0.7 11.6l2.5 24.4l2.7 21.4l2.9 14.7l2.2 10.7l5.2 17l5.2 12.7l5.1 9.9l5.2 8.1l5.1 6.9l5.2 6.1l15.4 16.1l11.1 10.3l6.1 5.1l7 5.2l8.1 5.1l9.9 5.2l12.7 5.1l17 5.2l25.5 5.1l21.4 2.7l24.5 2.5l47.8 2.4l72.3 1.8z"/>
<path fill="#4d4dc7" d="M673.6 542.3l78.7 1.2l118.7 0.6v-51l-123.9 0.5l-165.2 1.4l-67.1 0.2l-10.3 0.4l-5.2 0.7l-5.1 2.4l-2.2 2.4l1.5 5.1l4.7 5.2l7.1 5.1l10.1 5.2l14 5.1l20.8 5.2l26.6 4l15.5 1.7l36.1 2.6zM431.6 444.5l0.6 0.6l5.2 1.6l2.4-2.2l2.4-5.2l0.7-5.1l0.3-5.2l1.7-231.6l0.5-128.7h-51.2l0.6 118.4l1.3 77.2l2 46.3l3.2 43l5.1 35l5.2 20.7l5.2 14.1l5.1 9.9l5.2 7.2z"/>
<path fill="#4d4dbc" d="M655.3 537.1l40.2 1.3l46.5 0.8l129 1v-41.4l-160 1l-62 0.9l-36.1 1l-31 1.5l-25.8 2.1l-7.2 0.9l-3.1 0.9l-5.2 1.9l-4.4 2.4l1.3 5.1l8.5 5.2l16.2 5.1l28.6 5.2l32.4 3zM420.2 398.1l1.7 3.1l5.2 1.4l2.3-4.5l2-5.1l0.8-3.1l1-7.2l2.1-25.8l2-46.3l1-51.5l0.9-82.3l0.5-108.1h-41.5l0.5 87.5l0.8 61.8l1.4 56.6l1.4 25.7l2 25.8l2 20.6l2.6 15.4l2.7 14.6l5.2 16z"/>
<path fill="#4d4db1" d="M685.6 532l77 1.8l108.4 1v-29l-113.6 0.8l-46.4 0.9l-41.3 1.3l-25.8 1.3l-19.2 1.3l-11.8 1.9l-13.7 3.2l2.1 5.2l21.8 5.1l31.1 3zM416.5 336.4l0.3 1.2l5.1 2.1l2.2-8.5l2.8-15.4l1.2-15.5l1.9-41.2l1.4-51.4l0.8-56.5l0.5-82.5h-29.1l1 108.1l1.8 76.8l2.2 31.3l3 31z"/>
<path d="M380.5 68.7V609.2M329 557.5H871M432.5 68.7V609.2M329 506.5H871M483.5 68.7V609.2M329 454.5H871M535.5 68.7V609.2M329 403.5H871M587.5 68.7V609.2M329 351.5H871M638.5 68.7V609.2M329 300.5H871M690.5 68.7V609.2M329 248.5H871M741.5 68.7V609.2M329 197.5H871M793.5 68.7V609.2M329 145.5H871M845.5 68.7V609.2M329 94.5H871" stroke="#000" stroke-opacity=".05" fill="none"/>
<g shape-rendering="crispEdges">
<path fill="none" stroke="#0000af" stroke-width="1" d="M871 544.1l-118.7-0.6l-75.9-1.2l-48-2.1l-42.2-3.1l-35.4-5.1l-20.9-5.2l-14-5.1l-10-5.2l-7.2-5.1l-4.6-5.2l-1.2-5.1l1.3-1.4l5.1-2.7l5.5-1.1l10-0.4l222-1.7l134.2-0.5M445.3 68.7l-0.6 133.8l-1.7 221.4l-0.4 9.9l-1.1 5.5l-2.7 5.2l-1.4 1.2l-5.2-1.2l-5.1-4.6l-5.2-7.1l-5.1-10l-5.2-14l-5.2-20.8l-5.1-35.3l-3.1-42.1l-2.1-47.8l-1.2-75.7l-0.6-118.4"/>
<path fill="none" stroke="#0030ff" stroke-width="1" d="M871 561.7l-134.2-0.5l-87.8-1.1l-36.1-1.1l-30.8-1.3l-20.8-1.5l-20.7-1.9l-15.4-1.9l-25.9-4.5l-15.4-4l-10.4-3.2l-10.3-4l-10.1-4.7l-5.4-3.1l-10.9-7.2l-9.7-8.5l-5.2-5.3l-5.1-6.3l-5.2-7.4l-5.2-8.8l-5.1-10.9l-5.2-14l-5.2-19.1l-4.2-22.7l-2-15.4l-2.1-20.6l-2-26l-1.3-30.6l-0.9-30.9l-1.2-87.5l-0.5-139M476.6 68.7v128.7l0.4 66.9l1.1 46.3l1.1 20.6l1.1 15.5l1.6 15.4l2.4 15.4l2.2 10.3l2.9 10.3l3.9 10.3l2.5 5.2l3 5.1l3.6 5.2l4.3 5.1l5.5 5.2l7.8 5.7l5.2 2.9l5.1 2.5l10.3 3.9l10.4 2.9l10.3 2.2l15.5 2.4l15.5 1.6l15.4 1.1l20.7 1.1l46.5 1.1l67.1 0.4h129"/>
<path fill="none" stroke="#00afff" stroke-width="1" d="M871 572.1l-144.5-0.4l-87.8-1l-36.1-1l-31-1.2l-20.6-1.3l-20.7-1.8l-22.2-2.5l-13.9-2.4l-14.3-2.8l-18.6-5.1l-13.7-5.2l-10.6-5.1l-9.9-6.1l-5.7-4.2l-5.9-5.2l-3.9-3.9l-5.2-5.9l-4.2-5.6l-3.3-5.2l-3-5.1l-5-10.1l-4-10.5l-3.2-10.3l-3.9-15.4l-4.3-24.2l-2.1-17l-1.9-20.6l-1.4-20.6l-1.4-30.9l-0.9-36l-1.1-87.5l-0.5-149.3M502.4 68.7l0.2 108.1l0.7 61.7l1.4 46.4l1.3 20.6l1.3 15.4l1.9 15.5l2.8 15.4l2.5 10.3l3.3 10.3l4.4 10.3l3 5.5l5.1 7.7l6.6 7.4l6 5.1l7.7 5.2l5.5 3l10.4 4.3l10.3 3.3l10.3 2.5l15.5 2.7l15.5 2l15.5 1.3l20.6 1.3l46.5 1.4l61.9 0.6l108.4 0.2"/>
<path fill="none" stroke="#20ffdf" stroke-width="1" d="M871 579.9l-154.8-0.4l-93-1l-56.7-1.9l-25.9-1.5l-23.2-1.9l-18.1-2.3l-18.5-2.9l-22.1-5.1l-11-3.6l-5.1-1.8l-10.4-4.5l-10.1-5.6l-7.5-5.1l-8.2-7l-7.9-8.5l-7.4-10.3l-5.3-9.4l-5.2-11.7l-5.1-15.5l-4.8-20l-2.6-15.4l-3-23.1l-1.9-23.3l-1.5-25.7l-1.9-56.6l-1-92.7l-0.4-154.4M527.7 68.7l0.3 92.6l0.8 56.7l1.5 41.4l1.4 20.3l1.4 15.5l2 15.4l1.8 10.3l2.3 10.3l3 10.3l3.9 10.3l4.9 9.6l5.1 7.7l5.2 6l5.2 4.9l3.3 2.7l7 4.7l5.1 2.8l10.4 4.6l10.3 3.4l10.3 2.5l15.5 2.9l15.5 2l15.5 1.5l20.4 1.3l41.5 1.5l56.8 0.8l92.9 0.3"/>
<path fill="none" stroke="#9fff60" stroke-width="1" d="M871 586.2l-154.8-0.3l-93-0.9l-56.7-1.6l-25.9-1.4l-25.8-2l-20.6-2.2l-20.7-3.3l-10.3-2.1l-16.7-4.4l-14.3-5.1l-11-5.2l-9.6-5.7l-6.2-4.6l-5.9-5.1l-5-5.2l-3.6-4.1l-5.1-7.1l-5.6-9.4l-4.7-10.1l-2.1-5.3l-3.5-10.3l-4.8-18.7l-3.9-22.5l-2.5-20.6l-2.1-25.7l-1.5-25.8l-1.7-56.6l-1-92.7l-0.4-159.5M554.3 68.7l0.4 77.2l0.9 51.5l1.8 41.1l1.1 15.5l1.5 15.4l2.2 15.5l1.9 10.3l2.4 10.3l3.1 10.3l4.1 10.3l3.1 6.1l5.1 8.2l5.2 6.4l5.2 5.1l6.3 5l9.1 5.7l10.1 4.6l10.6 3.7l10.3 2.7l10.3 2.2l15.5 2.4l15.5 1.7l15.5 1.2l41.3 2l51.6 1l82.6 0.4"/>
<path fill="none" stroke="#ffdf00" stroke-width="1" d="M871 591.6l-154.8-0.3l-93-0.8l-36.1-0.8l-31-1l-25.8-1.5l-20.6-1.6l-20.6-2.1l-20.7-3.3l-10.3-2l-19-5l-14-5.2l-10.8-5.1l-7.9-4.8l-5.1-3.7l-8.2-7l-5-5.1l-4.2-5.2l-3.3-4.5l-3.6-5.8l-2.8-5.1l-3.9-8.3l-4.6-12.3l-4.4-15.5l-2.3-10.2l-3.4-20.6l-2.5-20.6l-2.1-25.8l-1.4-23.6l-0.9-27.9l-0.9-36l-0.9-92.7l-0.3-159.5M583.6 68.7l0.6 66.9l1.2 46.3l1.9 36.1l1.4 15.4l1.9 15.4l1.7 10.3l2.1 10.3l2.7 10.3l3.5 10.3l2.1 5.2l5.3 10.3l4.9 7.1l5.2 6l5.1 4.9l5.2 4.1l5.6 3.6l10 5.2l10.2 3.8l10.3 3.1l10.4 2.3l15.4 2.7l15.5 1.9l15.5 1.4l36.1 1.9l46.5 1.2l67.1 0.6"/>
<path fill="none" stroke="#ff7000" stroke-width="1" d="M871 596.4l-160-0.3l-92.9-0.8l-62-1.6l-25.8-1.3l-25.8-2l-20.6-2.2l-20.7-3.2l-10.3-2l-18.1-4.7l-14.3-5.1l-10.8-5.2l-8.7-5.1l-7-5.2l-5.8-5.1l-4.9-5.2l-4.3-5.1l-3.5-4.9l-3.4-5.4l-2.8-5.2l-4.2-8.9l-4.3-11.7l-3-10.3l-3.6-15.4l-3.5-20.6l-2.4-20.6l-2.1-25.7l-1.4-25.8l-0.9-25.7l-0.9-36l-0.8-92.7l-0.4-164.7M617.7 68.7l0.8 51.4l1.4 41.2l2.1 30.9l1.2 11.8l1.9 14l1.8 10.2l2.3 10.3l2.9 10.3l3.9 10.3l2.7 6.1l5.2 8.9l4.1 5.6l4.5 5.2l5.6 5.1l6.4 4.9l9.5 5.4l6 2.8l6.1 2.4l9.4 2.9l10.3 2.6l10.4 2l10.3 1.6l15.5 1.9l30.9 2.3l41.3 1.6l56.8 0.9"/>
<path fill="none" stroke="#ef0000" stroke-width="1" d="M871 600.6l-165.2-0.3l-98.1-0.8l-61.9-1.8l-25.8-1.5l-25.8-2l-20.7-2.5l-19.1-3.1l-17-3.9l-10.3-3.1l-9.1-3.3l-11.6-5.2l-10.3-6.2l-5.6-4l-6-5.2l-5-5.1l-4-4.7l-5.2-7.3l-5.2-8.8l-4.6-10.1l-2-5.2l-3.7-11l-5.2-21.4l-3.1-19l-2.5-20.6l-2-25.8l-1.4-25.7l-1.9-61.8l-0.8-97.8l-0.3-164.7M660 68.7l1.3 41.1l1.8 30.9l2.5 25.8l3.4 20.6l2.3 10.3l3 10.3l1.8 5.1l3.9 9.1l3.4 6.3l3.3 5.2l3.8 5.1l4.7 5.2l5.5 5l5.1 3.8l5.2 3.3l6.3 3.3l9.2 3.9l5.1 1.8l10.4 3l10.3 2.4l20.6 3.3l25.8 2.5l31 1.8l41.3 1.3"/>
<path fill="none" stroke="#800000" stroke-width="1" d="M871.5 609.5h-202l-5-5h-165l-5-6h-36l-6-5h-15l-5-5h-11l-5-5h-10l-5-5h-5l-6-5l-5-5l-5-6l-15-15l-6-5v-5l-5-6v-10l-5-5v-10l-5-5v-16l-5-5v-36l-5-5v-165l-5-5v-201M721.5 68.5v31l5 5v26l5 5v16l5 5v5l5 5v5l6 5l5 5v6h5l10 10h5l6 5h5l5 5h15l6 5h25l6 5h31"/>
</g>
<path shape-rendering="crispEdges" fill="none" stroke="#000" stroke-width="5" stroke-linejoin="round" d="M459.9 478.4v-0.8l-2.7-2l-2.8-2.8l-10.2-12.2l-7.4-10l-5.9-9.3l-4.3-8l-3.3-7.9l-2.2-7.7l-1.2-7.5l-0.2-5.3l0.1-5.3l3-27.6l0.4-8l-0.2-7.6l-0.6-8.1l-1.1-8.4l-4.7-26.7l-1.6-10l-1-9.8l-0.3-8.8l0.3-7.7l0.8-8.3l4-24.7l1.2-9.3l0.6-8.7l0.1-9.1l-0.4-8.4l-1-9.6l-5.2-37.6l-0.7-8.7l-0.3-8.4l0.3-8.3l0.8-8.9l4.4-27.6l1.2-9.7l0.7-11l-0.1-10.3"/>
</g>
<path d="M329.5 68.7V609.5H871" stroke="#7a1212" fill="none"/>
<path d="M329.5 609.7v-5M329 609.5h5M380.5 609.7v-5M329 557.5h5M432.5 609.7v-5M329 506.5h5M483.5 609.7v-5M329 454.5h5M535.5 609.7v-5M329 403.5h5M587.5 609.7v-5M329 351.5h5M638.5 609.7v-5M329 300.5h5M690.5 609.7v-5M329 248.5h5M741.5 609.7v-5M329 197.5h5M793.5 609.7v-5M329 145.5h5M845.5 609.7v-5M329 94.5h5" stroke="#000" stroke-opacity=".6" fill="none"/>
<g font-family="Liberation Sans, sans-serif" font-size="13.3" fill="#262626" letter-spacing="-0.2">
<text x="329" y="629" text-anchor="middle">0.4</text>
<text x="323.6" y="615.6" text-anchor="end">0.4</text>
<text x="380.6" y="629" text-anchor="middle">0.6</text>
<text x="323.6" y="564.1" text-anchor="end">0.6</text>
<text x="432.2" y="629" text-anchor="middle">0.8</text>
<text x="323.6" y="512.6" text-anchor="end">0.8</text>
<text x="483.9" y="629" text-anchor="middle">1</text>
<text x="323.6" y="461.2" text-anchor="end">1</text>
<text x="535.5" y="629" text-anchor="middle">1.2</text>
<text x="323.6" y="409.7" text-anchor="end">1.2</text>
<text x="587.1" y="629" text-anchor="middle">1.4</text>
<text x="323.6" y="358.2" text-anchor="end">1.4</text>
<text x="638.7" y="629" text-anchor="middle">1.6</text>
<text x="323.6" y="306.7" text-anchor="end">1.6</text>
<text x="690.3" y="629" text-anchor="middle">1.8</text>
<text x="323.6" y="255.2" text-anchor="end">1.8</text>
<text x="742" y="629" text-anchor="middle">2</text>
<text x="323.6" y="203.8" text-anchor="end">2</text>
<text x="793.6" y="629" text-anchor="middle">2.2</text>
<text x="323.6" y="152.3" text-anchor="end">2.2</text>
<text x="845.2" y="629" text-anchor="middle">2.4</text>
<text x="323.6" y="100.8" text-anchor="end">2.4</text>
</g>
<g font-family="Liberation Serif, serif" font-size="15" fill="#262626">
<text x="600" y="647" text-anchor="middle" textLength="146" lengthAdjust="spacing">A-B bond distance (Å)</text>
<text transform="translate(295.3 340) rotate(-90)" text-anchor="middle" textLength="146" lengthAdjust="spacing">B-C bond distance (Å)</text>
</g>
</svg>
</body>
</html>
